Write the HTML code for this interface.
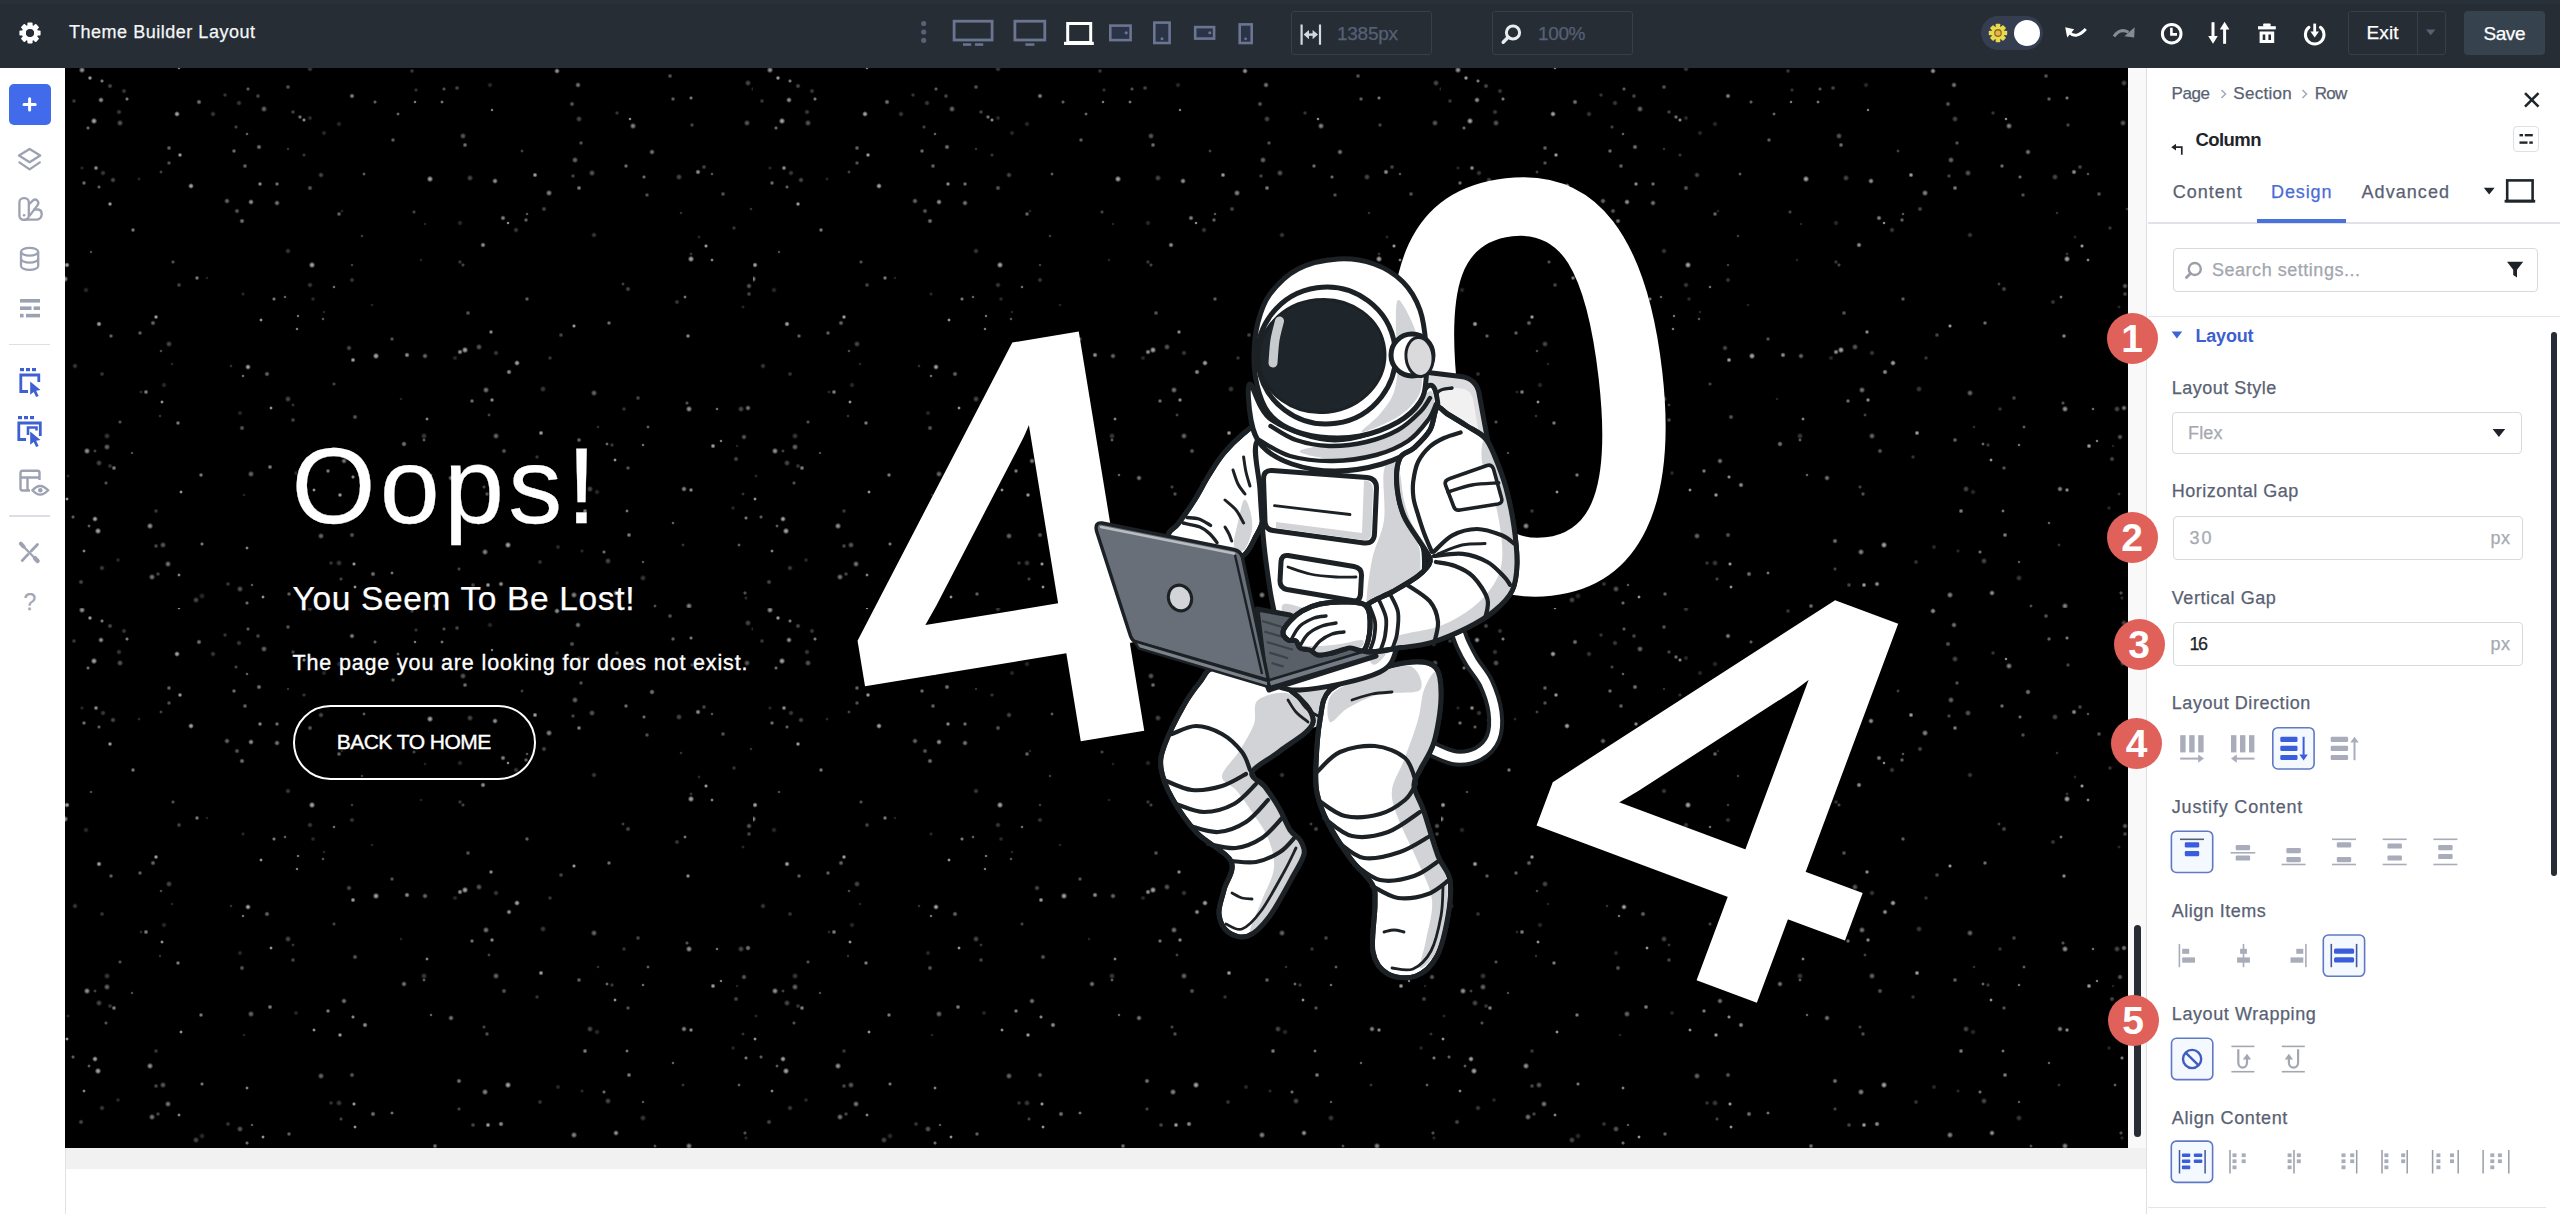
<!DOCTYPE html><html lang="en"><head><meta charset="utf-8"><title>Theme Builder Layout</title><style>
*{box-sizing:border-box;margin:0;padding:0}
html,body{width:2560px;height:1214px;overflow:hidden;background:#fff}
body{position:relative;font-family:"Liberation Sans",sans-serif;-webkit-font-smoothing:antialiased}
.t{position:absolute;white-space:nowrap;display:block;-webkit-text-stroke:0.25px currentColor}
.abs{position:absolute}
#top{position:absolute;left:0;top:0;width:2560px;height:68px;background:#262d35}
#top:before{content:"";position:absolute;left:0;top:0;width:100%;height:4px;background:#293038}
#side{position:absolute;left:0;top:68px;width:65px;height:1146px;background:#fff}
#canvas{position:absolute;left:65px;top:68px;width:2063px;height:1080px;background:#000;overflow:hidden}
#below{position:absolute;left:65px;top:1148px;width:2082px;height:21px;background:#f1f1f1}
#gutter{position:absolute;left:2128px;top:68px;width:19px;height:1080px;background:#f9f9f9}
#panel{position:absolute;left:2146px;top:68px;width:414px;height:1146px;background:#fff;border-left:1.5px solid #dcdfe3}
.box{position:absolute;border:1.5px solid #d6d9de;border-radius:4px;background:#fff}
.sel{position:absolute;border:1.5px solid #5b77c9;border-radius:5px;background:#f3f7ff}
.badge{position:absolute;width:51px;height:51px;border-radius:50%;background:#e0605a;color:#fff;font-weight:700;font-size:39px;line-height:51px;text-align:center}
</style></head><body>
<div id="top">
<svg class="abs" style="left:18px;top:21px" width="24" height="24" viewBox="-12 -12 24 24"><g fill="#fff"><rect x="-2.6" y="-10.6" width="5.2" height="6" rx="1" transform="rotate(0)"/><rect x="-2.6" y="-10.6" width="5.2" height="6" rx="1" transform="rotate(45)"/><rect x="-2.6" y="-10.6" width="5.2" height="6" rx="1" transform="rotate(90)"/><rect x="-2.6" y="-10.6" width="5.2" height="6" rx="1" transform="rotate(135)"/><rect x="-2.6" y="-10.6" width="5.2" height="6" rx="1" transform="rotate(180)"/><rect x="-2.6" y="-10.6" width="5.2" height="6" rx="1" transform="rotate(225)"/><rect x="-2.6" y="-10.6" width="5.2" height="6" rx="1" transform="rotate(270)"/><rect x="-2.6" y="-10.6" width="5.2" height="6" rx="1" transform="rotate(315)"/></g><circle r="6.1" fill="none" stroke="#fff" stroke-width="4"/><circle r="3.6" fill="#262d35"/></svg>
<span class="t" style="left:69.00px;top:21px;font-size:18px;line-height:22px;color:#f4f6f8;letter-spacing:0.521px;">Theme Builder Layout</span>
<svg class="abs" style="left:918px;top:18px" width="12" height="28" viewBox="0 0 12 28"><g fill="#59617a"><circle cx="5.7" cy="5.5" r="2.6"/><circle cx="5.7" cy="14" r="2.6"/><circle cx="5.7" cy="22.3" r="2.6"/></g></svg>
<svg class="abs" style="left:945px;top:14px" width="320" height="40" viewBox="945 14 320 40"><g fill="none" stroke="#6b7592" stroke-width="2.8"><rect x="954.1" y="21.2" width="38" height="18.8"/><rect x="1014.9" y="21.2" width="29.9" height="18.8"/></g><g fill="#6b7592"><rect x="963" y="43.3" width="8.2" height="2.5"/><rect x="975" y="43.3" width="8.2" height="2.5"/><rect x="1025.4" y="43.3" width="9" height="2.5"/></g><rect x="1067.7" y="23.5" width="23" height="19" fill="none" stroke="#fff" stroke-width="3"/><rect x="1064" y="41.8" width="29.8" height="3.2" fill="#fff"/><g fill="#2b3347" stroke="#6b7592" stroke-width="2.6"><rect x="1110.3" y="25.6" width="20.3" height="14.5"/><rect x="1154.3" y="22.6" width="15.3" height="20.4"/><rect x="1195.2" y="27.1" width="18.9" height="11.5"/><rect x="1239.7" y="24.4" width="12" height="18.6"/></g><g fill="#6b7592"><circle cx="1126.2" cy="32.8" r="1.6"/><circle cx="1162" cy="38.8" r="1.5"/><circle cx="1209.8" cy="32.8" r="1.5"/><circle cx="1245.6" cy="38.8" r="1.4"/></g></svg>
<div class="abs" style="left:1291px;top:11px;width:141px;height:44px;border:1.5px solid #363f4c;border-radius:3px"></div>
<svg class="abs" style="left:1299px;top:22px" width="24" height="26" viewBox="0 0 24 26"><g stroke="#d3d8e2" stroke-width="2.200" fill="none"><path d="M2.600 2.500v20.300M21 2.500v20.300"/><path d="M8 12.600h8" stroke-width="2.400"/></g><path d="M4.600 12.600l5.400-4.600v9.200zM19 12.600l-5.400-4.600v9.200z" fill="#d3d8e2"/></svg>
<span class="t" style="left:1337.00px;top:22px;font-size:19px;line-height:23px;color:#566176;letter-spacing:-0.268px;">1385px</span>
<div class="abs" style="left:1491.5px;top:11px;width:141px;height:44px;border:1.5px solid #363f4c;border-radius:3px"></div>
<svg class="abs" style="left:1500px;top:21px" width="24" height="24" viewBox="0 0 24 24"><circle cx="13" cy="11.5" r="6.6" fill="none" stroke="#e9ecef" stroke-width="3"/><path d="M8.2 16.2L3.2 21.2" stroke="#e9ecef" stroke-width="3.4" stroke-linecap="round"/></svg>
<span class="t" style="left:1538.00px;top:22px;font-size:19px;line-height:23px;color:#566176;letter-spacing:-0.367px;">100%</span>
<div class="abs" style="left:1980.5px;top:16px;width:62px;height:33.5px;border-radius:17px;background:#353e50"></div>
<svg class="abs" style="left:1986px;top:20.5px" width="24" height="24" viewBox="-12 -12 24 24"><g fill="#ead94c"><rect x="-2.3" y="-9.2" width="4.6" height="5" rx="0.8" transform="rotate(0)"/><rect x="-2.3" y="-9.2" width="4.6" height="5" rx="0.8" transform="rotate(45)"/><rect x="-2.3" y="-9.2" width="4.6" height="5" rx="0.8" transform="rotate(90)"/><rect x="-2.3" y="-9.2" width="4.6" height="5" rx="0.8" transform="rotate(135)"/><rect x="-2.3" y="-9.2" width="4.6" height="5" rx="0.8" transform="rotate(180)"/><rect x="-2.3" y="-9.2" width="4.6" height="5" rx="0.8" transform="rotate(225)"/><rect x="-2.3" y="-9.2" width="4.6" height="5" rx="0.8" transform="rotate(270)"/><rect x="-2.3" y="-9.2" width="4.6" height="5" rx="0.8" transform="rotate(315)"/></g><circle r="6.4" fill="#ead94c"/><circle r="3.9" fill="#8a6d1c"/><circle r="2.6" fill="#e9b44a"/></svg>
<div class="abs" style="left:2013.7px;top:19.5px;width:26px;height:26px;border-radius:50%;background:#fff"></div>
<svg class="abs" style="left:2063px;top:21px" width="26" height="24" viewBox="0 0 26 24"><path d="M6.5 11.5Q13 18.5 22.8 8" fill="none" stroke="#fff" stroke-width="3"/><path d="M2.2 6.2L11.2 8.2L4.2 16.4z" fill="#fff"/></svg>
<svg class="abs" style="left:2111px;top:21px" width="26" height="24" viewBox="0 0 26 24"><path d="M3 15.5Q9 6.5 17.5 11.3" fill="none" stroke="#858c95" stroke-width="3"/><path d="M23.6 6.2L23.2 16.6L13.4 15.2z" fill="#858c95"/></svg>
<svg class="abs" style="left:2159px;top:20.5px" width="26" height="26" viewBox="0 0 26 26"><circle cx="12.7" cy="12.7" r="9.3" fill="none" stroke="#fff" stroke-width="3"/><path d="M12.4 6.8v6.6h5.6" fill="none" stroke="#fff" stroke-width="2.6"/></svg>
<svg class="abs" style="left:2206px;top:20px" width="26" height="26" viewBox="0 0 26 26"><g stroke="#fff" stroke-width="3" fill="none"><path d="M7 2.2v15"/><path d="M18.6 8.5v15.3"/></g><path d="M2.2 16h9.6L7 23.8zM13.8 9.4h9.6L18.6 1.8z" fill="#fff"/></svg>
<svg class="abs" style="left:2255px;top:20px" width="24" height="26" viewBox="0 0 24 26"><g fill="#fff"><rect x="3" y="6.2" width="17.8" height="3.2"/><rect x="8.2" y="3.4" width="7.4" height="3.4" rx="0.8"/><path d="M4.6 11.6h14.6v11.4H4.6zM7.7 14.6v5.4h2.6v-5.4zM13.4 14.6v5.4h2.6v-5.4z" fill-rule="evenodd"/></g></svg>
<svg class="abs" style="left:2302px;top:20.5px" width="26" height="26" viewBox="0 0 26 26"><path d="M7 6.3A9.3 9.3 0 1 0 18.4 6.3" fill="none" stroke="#fff" stroke-width="3" stroke-linecap="round"/><path d="M12.7 2.6v9" stroke="#fff" stroke-width="2.8" fill="none"/><path d="M8.4 10.6h8.6L12.7 16.6z" fill="#fff"/></svg>
<div class="abs" style="left:2348px;top:11px;width:97.5px;height:44px;border:1.5px solid #363f4c;border-radius:3px"></div>
<div class="abs" style="left:2416.5px;top:11px;width:1.5px;height:44px;background:#363f4c"></div>
<span class="t" style="left:2366.50px;top:21px;font-size:19px;line-height:23px;color:#fff;letter-spacing:0.109px;">Exit</span>
<svg class="abs" style="left:2424px;top:28px" width="14" height="10" viewBox="0 0 14 10"><path d="M2 1.5h9.4L6.7 7.2z" fill="#596275"/></svg>
<div class="abs" style="left:2464px;top:11px;width:81px;height:44px;border-radius:4px;background:#37424f"></div>
<span class="t" style="left:2483.50px;top:22px;font-size:19px;line-height:23px;color:#fff;letter-spacing:-0.434px;">Save</span>
</div>
<div id="side"></div>
<div class="abs" style="left:9px;top:83.5px;width:41.5px;height:41.5px;border-radius:5px;background:#416bea"></div>
<svg class="abs" style="left:19px;top:94px" width="21" height="21" viewBox="0 0 21 21"><path d="M10.600 4.800v11.200M5 10.400h11.200" stroke="#fff" stroke-width="3" stroke-linecap="round" fill="none"/></svg>
<svg class="abs" style="left:16px;top:146px" width="28" height="28" viewBox="0 0 28 28"><g fill="none" stroke="#9da2b3" stroke-width="2.3" stroke-linejoin="round" stroke-linecap="round"><path d="M13.6 3L24.2 9.6L13.6 16.2L3 9.6z"/><path d="M3.400 16.400L13.600 23.400L23.800 16.400" /></g></svg>
<svg class="abs" style="left:16px;top:195px" width="30" height="28" viewBox="0 0 30 28"><g fill="none" stroke="#9da2b3" stroke-width="2.3" stroke-linejoin="round"><rect x="3.4" y="3.2" width="9.4" height="21.6" rx="4.2"/><path d="M12.8 9.5l4.5-4.3q2-1.6 4 0.300q2 2.300 0.300 4.600l-8.300 11"/><path d="M17.500 14.500h4.800q3.400 0.600 3.400 4.800q-0.400 4.600-4.600 5.300h-12.600"/></g><circle cx="8.1" cy="20.300" r="1.300" fill="#9da2b3"/></svg>
<svg class="abs" style="left:17px;top:245px" width="26" height="28" viewBox="0 0 26 28"><g fill="none" stroke="#9da2b3" stroke-width="2.300"><ellipse cx="12.6" cy="6.800" rx="8.600" ry="3.900"/><path d="M4 6.800v14.200c0 2.200 3.900 3.900 8.600 3.900s8.600-1.700 8.600-3.900V6.800"/><path d="M4 13.800c0 2.200 3.900 3.900 8.600 3.900s8.600-1.700 8.600-3.900"/></g></svg>
<svg class="abs" style="left:18px;top:297px" width="24" height="24" viewBox="0 0 24 24"><g fill="#9da2b3"><rect x="2" y="2" width="20" height="3.600"/><rect x="2" y="9.400" width="11.500" height="3.600"/><rect x="15.600" y="9.400" width="6.400" height="3.600"/><rect x="2" y="16.800" width="3.600" height="3.600"/><rect x="8" y="16.800" width="14" height="3.600"/></g></svg>
<div class="abs" style="left:9px;top:343.500px;width:41px;height:1.500px;background:#dcdfe4"></div>
<svg class="abs" style="left:16px;top:364px" width="28" height="36" viewBox="0 0 28 36"><g fill="#3e60d2"><rect x="4" y="4" width="4" height="3.200"/><rect x="10" y="4" width="4" height="3.200"/><rect x="16" y="4" width="4" height="3.200"/></g><path d="M12 27.500H4.800V11h18v7" fill="none" stroke="#3e60d2" stroke-width="2.800"/><path d="M14.200 17.500l10.300 8.600-4.300 0.700 2.400 5.200-2.500 1.100-2.400-5.200-3.500 2.900z" fill="#3e60d2"/></svg>
<svg class="abs" style="left:14px;top:412px" width="32" height="38" viewBox="0 0 32 38"><g fill="#3e60d2"><rect x="4" y="4" width="4" height="3.200"/><rect x="10" y="4" width="4" height="3.200"/><rect x="16" y="4" width="4" height="3.200"/></g><path d="M12 27.500H4.800V11h21.500v13" fill="none" stroke="#3e60d2" stroke-width="2.800"/><path d="M14 23V15.500h8.500v3" fill="none" stroke="#3e60d2" stroke-width="2.600"/><path d="M16.200 19.500l10.300 8.600-4.300 0.700 2.400 5.200-2.500 1.100-2.400-5.200-3.500 2.900z" fill="#3e60d2"/></svg>
<svg class="abs" style="left:16px;top:466px" width="36" height="34" viewBox="0 0 36 34"><g fill="none" stroke="#9da2b3" stroke-width="2.400"><path d="M14 24.500H6.500q-2 0-2-2V6.800q0-2 2-2h15q2 0 2 2V14"/><path d="M4.500 11.500h19M11.500 11.500v13"/><path d="M16.500 24.300q7.500-8.600 15.600 0q-8.100 8.600-15.600 0z" fill="#fff"/></g><circle cx="24.300" cy="24.300" r="2.300" fill="#9da2b3"/></svg>
<div class="abs" style="left:9px;top:515px;width:41px;height:1.500px;background:#dcdfe4"></div>
<svg class="abs" style="left:17px;top:540px" width="26" height="26" viewBox="0 0 26 26"><g stroke="#9da2b3" fill="none" stroke-linecap="round"><path d="M6 6L19.500 20" stroke-width="2.200"/><path d="M20.500 4.500L14.200 11M11 14.400L5.200 20.600" stroke-width="2.800"/><path d="M18 18.200l2.600 2.800" stroke-width="4.400"/><path d="M3.800 3.600l2.800 3" stroke-width="3.800"/></g></svg>
<span class="t" style="left:23.60px;top:588px;font-size:23px;line-height:28px;color:#a3a7b4;">?</span>
<div id="below"></div><div id="gutter"></div><div class="abs" style="left:65px;top:1148px;width:1px;height:66px;background:#e2e2e2"></div>
<div class="abs" style="left:2133.5px;top:925px;width:7px;height:212px;border-radius:4px;background:#262d35"></div>
<div id="panel"></div>
<span class="t" style="left:2171.50px;top:84px;font-size:17px;line-height:20px;color:#596173;letter-spacing:-0.398px;">Page</span>
<span class="t" style="left:2233.30px;top:84px;font-size:17px;line-height:20px;color:#596173;letter-spacing:0.301px;">Section</span>
<span class="t" style="left:2314.80px;top:84px;font-size:17px;line-height:20px;color:#596173;letter-spacing:-0.776px;">Row</span>
<svg class="abs" style="left:2218.5px;top:88px" width="10" height="12" viewBox="0 0 10 12"><path d="M2.5 2l4 4-4 4" fill="none" stroke="#a4a9b6" stroke-width="1.500"/></svg>
<svg class="abs" style="left:2300px;top:88px" width="10" height="12" viewBox="0 0 10 12"><path d="M2.5 2l4 4-4 4" fill="none" stroke="#a4a9b6" stroke-width="1.500"/></svg>
<svg class="abs" style="left:2521px;top:89px" width="22" height="22" viewBox="0 0 22 22"><path d="M4 4.200l13.500 13.500M17.500 4.200L4 17.700" stroke="#20252b" stroke-width="2.600" fill="none"/></svg>
<svg class="abs" style="left:2169px;top:140px" width="18" height="18" viewBox="0 0 18 18"><path d="M4.500 7.200h8.300v7.600" fill="none" stroke="#20252b" stroke-width="1.700"/><path d="M2.200 7.200l4.800-3.400v6.800z" fill="#20252b"/></svg>
<span class="t" style="left:2195.50px;top:129px;font-size:18.5px;line-height:22px;color:#1f242b;font-weight:700;-webkit-text-stroke:0;letter-spacing:-0.571px;">Column</span>
<div class="abs" style="left:2513px;top:126px;width:26px;height:26px;border:1.500px solid #dcdfe4;border-radius:4px;background:#fff"></div>
<svg class="abs" style="left:2513px;top:126px" width="26" height="26" viewBox="0 0 26 26"><g fill="#23282f"><rect x="6.500" y="8" width="3.500" height="2.400"/><rect x="11.800" y="8" width="8" height="2.400"/><rect x="6.500" y="15.400" width="8" height="2.400"/><rect x="16.300" y="15.400" width="3.500" height="2.400"/></g></svg>
<span class="t" style="left:2172.80px;top:181px;font-size:18px;line-height:22px;color:#596173;letter-spacing:0.994px;">Content</span>
<span class="t" style="left:2271.00px;top:181px;font-size:18px;line-height:22px;color:#4a6cd4;letter-spacing:0.893px;">Design</span>
<span class="t" style="left:2361.50px;top:181px;font-size:18px;line-height:22px;color:#596173;letter-spacing:1.062px;">Advanced</span>
<div class="abs" style="left:2147.500px;top:222px;width:412.500px;height:1.500px;background:#dfe2e6"></div>
<div class="abs" style="left:2257px;top:218.700px;width:89px;height:4.300px;background:#4a72de"></div>
<svg class="abs" style="left:2482px;top:186px" width="14" height="10" viewBox="0 0 14 10"><path d="M1.800 1.800h10.800L7.200 8.600z" fill="#1e2329"/></svg>
<svg class="abs" style="left:2503px;top:177px" width="34" height="28" viewBox="0 0 34 28"><rect x="4.200" y="3.400" width="25.400" height="20.600" fill="none" stroke="#20252b" stroke-width="2.600"/><rect x="1.600" y="22.800" width="30.600" height="2.800" fill="#20252b"/></svg>
<div class="box" style="left:2172.500px;top:247.500px;width:365.500px;height:44.500px"></div>
<svg class="abs" style="left:2183px;top:259px" width="22" height="22" viewBox="0 0 22 22"><circle cx="11.800" cy="10" r="6" fill="none" stroke="#9a9fa8" stroke-width="2.400"/><path d="M7.500 14.400L3.400 18.600" stroke="#9a9fa8" stroke-width="2.800" stroke-linecap="round"/></svg>
<span class="t" style="left:2212.00px;top:259px;font-size:18px;line-height:22px;color:#a2a6ae;letter-spacing:0.525px;">Search settings...</span>
<svg class="abs" style="left:2505px;top:259px" width="20" height="22" viewBox="0 0 20 22"><path d="M2 2.800h16.200L12 10.800v7.600l-3.800-2.400v-5.200z" fill="#1e2329"/></svg>
<div class="abs" style="left:2147.500px;top:315.500px;width:412.500px;height:1.500px;background:#e3e5e9"></div>
<div class="abs" style="left:2551px;top:332px;width:6px;height:544px;border-radius:3px;background:#262d35"></div>
<svg class="abs" style="left:2169px;top:329px" width="16" height="12" viewBox="0 0 16 12"><path d="M2.600 2.600h10.600L7.900 9.400z" fill="#3f63d8"/></svg>
<span class="t" style="left:2195.50px;top:325px;font-size:18px;line-height:22px;color:#3d5fd0;font-weight:700;-webkit-text-stroke:0;letter-spacing:-0.201px;">Layout</span>
<span class="t" style="left:2171.80px;top:377px;font-size:18px;line-height:22px;color:#596173;letter-spacing:0.495px;">Layout Style</span>
<div class="box" style="left:2171.500px;top:412px;width:350px;height:41.500px"></div>
<span class="t" style="left:2188.00px;top:422px;font-size:18px;line-height:22px;color:#a6a9b1;letter-spacing:0.166px;">Flex</span>
<svg class="abs" style="left:2490px;top:426px" width="18" height="14" viewBox="0 0 18 14"><path d="M2.600 3h12.600L8.900 11z" fill="#1e2329"/></svg>
<span class="t" style="left:2171.80px;top:480px;font-size:18px;line-height:22px;color:#596173;letter-spacing:0.495px;">Horizontal Gap</span>
<div class="box" style="left:2172.500px;top:516px;width:350.500px;height:43.500px"></div>
<span class="t" style="left:2189.50px;top:527px;font-size:18px;line-height:22px;color:#a6a9b1;letter-spacing:1.984px;">30</span>
<span class="t" style="left:2490.50px;top:527px;font-size:18px;line-height:22px;color:#a6a9b1;letter-spacing:0.492px;">px</span>
<span class="t" style="left:2171.80px;top:587px;font-size:18px;line-height:22px;color:#596173;letter-spacing:0.541px;">Vertical Gap</span>
<div class="box" style="left:2172.500px;top:622px;width:350.500px;height:43.500px"></div>
<span class="t" style="left:2189.50px;top:633px;font-size:18px;line-height:22px;color:#1f242b;letter-spacing:-1.516px;">16</span>
<span class="t" style="left:2490.50px;top:633px;font-size:18px;line-height:22px;color:#a6a9b1;letter-spacing:0.492px;">px</span>
<span class="t" style="left:2171.80px;top:692px;font-size:18px;line-height:22px;color:#596173;letter-spacing:0.562px;">Layout Direction</span>
<span class="t" style="left:2171.80px;top:796px;font-size:18px;line-height:22px;color:#596173;letter-spacing:0.818px;">Justify Content</span>
<span class="t" style="left:2171.80px;top:900px;font-size:18px;line-height:22px;color:#596173;letter-spacing:0.497px;">Align Items</span>
<span class="t" style="left:2171.80px;top:1003px;font-size:18px;line-height:22px;color:#596173;letter-spacing:0.589px;">Layout Wrapping</span>
<span class="t" style="left:2171.80px;top:1107px;font-size:18px;line-height:22px;color:#596173;letter-spacing:0.619px;">Align Content</span>
<div class="abs" style="left:2147.500px;top:1206.500px;width:398px;height:1.500px;background:#e3e5e9"></div>
<svg class="abs" style="left:2160px;top:720px" width="380" height="480" viewBox="2160 720 380 480"><rect x="2180.2" y="735.200" width="5.400" height="17.200" fill="#a9acba"/><rect x="2189.2" y="735.200" width="5.400" height="17.200" fill="#a9acba"/><rect x="2198.2" y="735.200" width="5.400" height="17.200" fill="#a9acba"/><path d="M2180.200 758.600h20" stroke="#a9acba" stroke-width="2" fill="none"/><path d="M2198.200 754.400l5.800 4.200-5.800 4.200z" fill="#a9acba"/><rect x="2231" y="735.200" width="5.400" height="17.200" fill="#a9acba"/><rect x="2240" y="735.200" width="5.400" height="17.200" fill="#a9acba"/><rect x="2249" y="735.200" width="5.400" height="17.200" fill="#a9acba"/><path d="M2234.500 758.600h20" stroke="#a9acba" stroke-width="2" fill="none"/><path d="M2236.800 754.400l-5.800 4.200 5.800 4.200z" fill="#a9acba"/><rect x="2272.8" y="727.7" width="41.3" height="41.3" rx="5" fill="#f4f8ff" stroke="#5f79c4" stroke-width="1.600"/><rect x="2280.300" y="736.8" width="17.200" height="5.100" rx="1.200" fill="#3a5ddb"/><rect x="2280.300" y="745.8" width="17.200" height="5.100" rx="1.200" fill="#3a5ddb"/><rect x="2280.300" y="754.9" width="17.200" height="5.100" rx="1.200" fill="#3a5ddb"/><path d="M2303.600 736.800v18" stroke="#3a5ddb" stroke-width="2" fill="none"/><path d="M2299.400 754.600h8.400l-4.200 5.800z" fill="#3a5ddb"/><rect x="2330.700" y="736.8" width="17.400" height="5.100" rx="1.200" fill="#a9acba"/><rect x="2330.700" y="745.8" width="17.400" height="5.100" rx="1.200" fill="#a9acba"/><rect x="2330.700" y="754.9" width="17.400" height="5.100" rx="1.200" fill="#a9acba"/><path d="M2354.500 760.200v-18" stroke="#a9acba" stroke-width="2" fill="none"/><path d="M2350.300 742.600h8.400l-4.200-5.800z" fill="#a9acba"/><rect x="2171.4" y="831.2" width="41.3" height="41.3" rx="5" fill="#f4f8ff" stroke="#5f79c4" stroke-width="1.600"/><rect x="2180" y="838.500" width="24" height="1.600" fill="#5a6072"/><rect x="2184.8" y="842.2" width="14.400" height="5.200" rx="1.200" fill="#3a5ddb"/><rect x="2184.8" y="851" width="14.400" height="5.200" rx="1.200" fill="#3a5ddb"/><rect x="2230.6" y="852" width="24.600" height="1.600" fill="#a9acba"/><rect x="2235.7000000000003" y="845" width="14.400" height="5.200" rx="1.200" fill="#a9acba"/><rect x="2235.7000000000003" y="855.4" width="14.400" height="5.200" rx="1.200" fill="#a9acba"/><rect x="2281.6" y="863.700" width="24" height="1.600" fill="#a9acba"/><rect x="2286.4" y="848" width="14.400" height="5.200" rx="1.200" fill="#a9acba"/><rect x="2286.4" y="857" width="14.400" height="5.200" rx="1.200" fill="#a9acba"/><rect x="2332" y="838.500" width="24" height="1.600" fill="#a9acba"/><rect x="2332" y="863.700" width="24" height="1.600" fill="#a9acba"/><rect x="2336.8" y="842.2" width="14.400" height="5.200" rx="1.200" fill="#a9acba"/><rect x="2336.8" y="857" width="14.400" height="5.200" rx="1.200" fill="#a9acba"/><rect x="2382.7" y="838.500" width="24" height="1.600" fill="#a9acba"/><rect x="2382.7" y="863.700" width="24" height="1.600" fill="#a9acba"/><rect x="2387.5" y="843.4" width="14.400" height="5.200" rx="1.200" fill="#a9acba"/><rect x="2387.5" y="855.4" width="14.400" height="5.200" rx="1.200" fill="#a9acba"/><rect x="2433.4" y="838.500" width="24" height="1.600" fill="#a9acba"/><rect x="2433.4" y="863.700" width="24" height="1.600" fill="#a9acba"/><rect x="2438.2000000000003" y="845" width="14.400" height="5.200" rx="1.200" fill="#a9acba"/><rect x="2438.2000000000003" y="853.9" width="14.400" height="5.200" rx="1.200" fill="#a9acba"/><rect x="2178.6" y="943.9" width="1.6" height="23.300000000000068" fill="#a9acba"/><rect x="2182.200" y="948.800" width="7" height="5" fill="#a9acba"/><rect x="2182.200" y="957.400" width="12.800" height="5.300" fill="#a9acba"/><rect x="2242.7" y="943.9" width="1.6" height="23.300000000000068" fill="#a9acba"/><rect x="2240.100" y="948.800" width="6.800" height="5" fill="#a9acba"/><rect x="2237.100" y="957.400" width="12.800" height="5.300" fill="#a9acba"/><rect x="2305.1" y="943.9" width="1.6" height="23.300000000000068" fill="#a9acba"/><rect x="2296.300" y="948.800" width="7" height="5" fill="#a9acba"/><rect x="2290.500" y="957.400" width="12.800" height="5.300" fill="#a9acba"/><rect x="2323.3" y="935" width="41.3" height="41.3" rx="5" fill="#f4f8ff" stroke="#5f79c4" stroke-width="1.600"/><rect x="2330.5" y="943.9" width="1.6" height="23.300000000000068" fill="#41579f"/><rect x="2355.7999999999997" y="943.9" width="1.6" height="23.300000000000068" fill="#41579f"/><rect x="2334" y="948.400" width="20.100" height="5.300" rx="1.500" fill="#3a5ddb"/><rect x="2334" y="957.200" width="20.100" height="5.400" rx="1.500" fill="#3a5ddb"/><rect x="2171.5" y="1038.3" width="41.3" height="41.3" rx="5" fill="#f4f8ff" stroke="#5f79c4" stroke-width="1.600"/><circle cx="2192.100" cy="1059" r="9.100" fill="none" stroke="#3f5cc0" stroke-width="2.400"/><path d="M2185.600 1052.600l13 12.800" stroke="#3f5cc0" stroke-width="2.400"/><rect x="2231.400" y="1045.600" width="23" height="1.600" fill="#a3a7b0"/><rect x="2231.400" y="1070.900" width="23" height="1.600" fill="#a3a7b0"/><path d="M2238.300 1049.300v13.500a4.350 4.800 0 0 0 8.700 0v-4.500" fill="none" stroke="#a3a7b0" stroke-width="2.200"/><path d="M2242.800 1059.400h8.400l-4.200-5.600z" fill="#a3a7b0"/><rect x="2281.800" y="1045.600" width="23" height="1.600" fill="#a3a7b0"/><rect x="2281.800" y="1070.900" width="23" height="1.600" fill="#a3a7b0"/><path d="M2298.100 1049.300v13.500a4.600 4.800 0 0 1-9.200 0v-4.500" fill="none" stroke="#a3a7b0" stroke-width="2.200"/><path d="M2284.700 1059.400h8.400l-4.200-5.600z" fill="#a3a7b0"/><rect x="2171.3" y="1141.1" width="41.3" height="41.3" rx="5" fill="#f4f8ff" stroke="#5f79c4" stroke-width="1.600"/><rect x="2178.75" y="1150" width="1.5" height="23.5" fill="#41579f"/><rect x="2204.35" y="1150" width="1.5" height="23.5" fill="#41579f"/><rect x="2181.900" y="1153.4" width="8.400" height="3.700" rx="1" fill="#3a5ddb"/><rect x="2193.800" y="1153.4" width="8.500" height="3.700" rx="1" fill="#3a5ddb"/><rect x="2181.900" y="1159.4" width="8.400" height="3.700" rx="1" fill="#3a5ddb"/><rect x="2193.800" y="1159.4" width="8.500" height="3.700" rx="1" fill="#3a5ddb"/><rect x="2181.900" y="1165.5" width="8.400" height="3.700" rx="1" fill="#3a5ddb"/><rect x="2229.25" y="1150" width="1.5" height="23.5" fill="#9a9da8"/><rect x="2232.5" y="1153.4" width="4" height="3.700" fill="#a9acba"/><rect x="2241.7" y="1153.4" width="4" height="3.700" fill="#a9acba"/><rect x="2232.5" y="1159.4" width="4" height="3.700" fill="#a9acba"/><rect x="2241.7" y="1159.4" width="4" height="3.700" fill="#a9acba"/><rect x="2232.5" y="1165.5" width="4" height="3.700" fill="#a9acba"/><rect x="2293.25" y="1150" width="1.5" height="23.5" fill="#9a9da8"/><rect x="2287.6" y="1153.4" width="4" height="3.700" fill="#a9acba"/><rect x="2296.8" y="1153.4" width="4" height="3.700" fill="#a9acba"/><rect x="2287.6" y="1159.4" width="4" height="3.700" fill="#a9acba"/><rect x="2296.8" y="1159.4" width="4" height="3.700" fill="#a9acba"/><rect x="2287.6" y="1165.5" width="4" height="3.700" fill="#a9acba"/><rect x="2355.95" y="1150" width="1.5" height="23.5" fill="#9a9da8"/><rect x="2341.5" y="1153.4" width="4" height="3.700" fill="#a9acba"/><rect x="2350.2" y="1153.4" width="4" height="3.700" fill="#a9acba"/><rect x="2341.5" y="1159.4" width="4" height="3.700" fill="#a9acba"/><rect x="2350.2" y="1159.4" width="4" height="3.700" fill="#a9acba"/><rect x="2341.5" y="1165.5" width="4" height="3.700" fill="#a9acba"/><rect x="2381.25" y="1150" width="1.5" height="23.5" fill="#9a9da8"/><rect x="2406.45" y="1150" width="1.5" height="23.5" fill="#9a9da8"/><rect x="2384.4" y="1153.4" width="4" height="3.700" fill="#a9acba"/><rect x="2401.2" y="1153.4" width="4" height="3.700" fill="#a9acba"/><rect x="2384.4" y="1159.4" width="4" height="3.700" fill="#a9acba"/><rect x="2401.2" y="1159.4" width="4" height="3.700" fill="#a9acba"/><rect x="2384.4" y="1165.5" width="4" height="3.700" fill="#a9acba"/><rect x="2431.85" y="1150" width="1.5" height="23.5" fill="#9a9da8"/><rect x="2457.45" y="1150" width="1.5" height="23.5" fill="#9a9da8"/><rect x="2436.4" y="1153.4" width="4" height="3.700" fill="#a9acba"/><rect x="2450" y="1153.4" width="4" height="3.700" fill="#a9acba"/><rect x="2436.4" y="1159.4" width="4" height="3.700" fill="#a9acba"/><rect x="2450" y="1159.4" width="4" height="3.700" fill="#a9acba"/><rect x="2436.4" y="1165.5" width="4" height="3.700" fill="#a9acba"/><rect x="2482.35" y="1150" width="1.5" height="23.5" fill="#9a9da8"/><rect x="2508.05" y="1150" width="1.5" height="23.5" fill="#9a9da8"/><rect x="2490.3" y="1153.4" width="4" height="3.700" fill="#a9acba"/><rect x="2497.9" y="1153.4" width="4" height="3.700" fill="#a9acba"/><rect x="2490.3" y="1159.4" width="4" height="3.700" fill="#a9acba"/><rect x="2497.9" y="1159.4" width="4" height="3.700" fill="#a9acba"/><rect x="2490.3" y="1165.5" width="4" height="3.700" fill="#a9acba"/></svg>
<svg id="canvas" class="abs" width="2063" height="1080" viewBox="65 68 2063 1080" style="left:65px;top:68px;background:#000"><defs><pattern id="st" x="65" y="68" width="688" height="540" patternUnits="userSpaceOnUse"><g fill="url(#sg)"><circle cx="223" cy="81" r="1.8" opacity="0.24"/><circle cx="565" cy="51" r="1.8" opacity="0.68"/><circle cx="148" cy="46" r="3.0" opacity="0.24"/><circle cx="166" cy="298" r="1.8" opacity="0.24"/><circle cx="652" cy="341" r="1.8" opacity="0.54"/><circle cx="34" cy="119" r="2.2" opacity="0.42"/><circle cx="288" cy="292" r="2.6" opacity="0.68"/><circle cx="561" cy="98" r="2.4" opacity="0.48"/><circle cx="67" cy="385" r="1.8" opacity="0.36"/><circle cx="342" cy="287" r="2.8" opacity="0.6"/><circle cx="403" cy="245" r="2.6" opacity="0.36"/><circle cx="547" cy="377" r="2.4" opacity="0.24"/><circle cx="395" cy="284" r="2.8" opacity="0.6"/><circle cx="198" cy="529" r="2.0" opacity="0.68"/><circle cx="288" cy="409" r="2.2" opacity="0.6"/><circle cx="290" cy="519" r="2.0" opacity="0.68"/><circle cx="394" cy="473" r="2.8" opacity="0.48"/><circle cx="478" cy="321" r="3.3" opacity="0.24"/><circle cx="578" cy="510" r="3.3" opacity="0.24"/><circle cx="42" cy="379" r="3.3" opacity="0.42"/><circle cx="493" cy="479" r="2.8" opacity="0.18"/><circle cx="647" cy="192" r="2.0" opacity="0.6"/><circle cx="41" cy="415" r="2.2" opacity="0.36"/><circle cx="274" cy="495" r="3.3" opacity="0.24"/><circle cx="114" cy="217" r="2.6" opacity="0.3"/><circle cx="564" cy="467" r="2.6" opacity="0.54"/><circle cx="679" cy="369" r="3.0" opacity="0.36"/><circle cx="104" cy="95" r="2.4" opacity="0.36"/><circle cx="8" cy="449" r="2.2" opacity="0.42"/><circle cx="194" cy="79" r="2.8" opacity="0.48"/><circle cx="656" cy="373" r="1.8" opacity="0.6"/><circle cx="619" cy="421" r="3.0" opacity="0.54"/><circle cx="274" cy="56" r="3.0" opacity="0.18"/><circle cx="131" cy="532" r="3.3" opacity="0.3"/><circle cx="76" cy="324" r="2.0" opacity="0.18"/><circle cx="390" cy="290" r="2.8" opacity="0.18"/><circle cx="48" cy="112" r="3.0" opacity="0.3"/><circle cx="436" cy="516" r="2.8" opacity="0.6"/><circle cx="85" cy="458" r="3.3" opacity="0.6"/><circle cx="333" cy="46" r="2.0" opacity="0.48"/><circle cx="509" cy="258" r="2.2" opacity="0.68"/><circle cx="16" cy="514" r="2.8" opacity="0.3"/><circle cx="475" cy="494" r="2.6" opacity="0.24"/><circle cx="479" cy="141" r="2.8" opacity="0.3"/><circle cx="245" cy="120" r="2.8" opacity="0.36"/><circle cx="422" cy="426" r="2.4" opacity="0.36"/><circle cx="563" cy="400" r="2.4" opacity="0.36"/><circle cx="356" cy="192" r="1.8" opacity="0.18"/><circle cx="544" cy="255" r="2.4" opacity="0.48"/><circle cx="308" cy="506" r="2.8" opacity="0.48"/><circle cx="55" cy="55" r="3.3" opacity="0.36"/><circle cx="232" cy="261" r="1.8" opacity="0.6"/><circle cx="626" cy="186" r="2.0" opacity="0.24"/><circle cx="626" cy="422" r="2.4" opacity="0.6"/><circle cx="612" cy="234" r="2.8" opacity="0.24"/><circle cx="551" cy="525" r="3.0" opacity="0.6"/><circle cx="276" cy="511" r="2.2" opacity="0.3"/><circle cx="683" cy="15" r="3.3" opacity="0.3"/><circle cx="421" cy="322" r="3.3" opacity="0.48"/><circle cx="107" cy="296" r="1.8" opacity="0.18"/><circle cx="550" cy="392" r="2.0" opacity="0.68"/><circle cx="516" cy="75" r="2.4" opacity="0.36"/><circle cx="19" cy="115" r="2.4" opacity="0.48"/><circle cx="178" cy="226" r="2.2" opacity="0.18"/><circle cx="626" cy="191" r="3.3" opacity="0.68"/><circle cx="289" cy="496" r="2.2" opacity="0.68"/><circle cx="104" cy="276" r="3.3" opacity="0.3"/><circle cx="419" cy="419" r="2.2" opacity="0.3"/><circle cx="97" cy="334" r="2.0" opacity="0.68"/><circle cx="42" cy="368" r="3.3" opacity="0.24"/><circle cx="608" cy="31" r="2.4" opacity="0.42"/><circle cx="29" cy="53" r="3.3" opacity="0.68"/><circle cx="19" cy="483" r="2.0" opacity="0.6"/><circle cx="224" cy="526" r="2.4" opacity="0.42"/><circle cx="311" cy="288" r="3.3" opacity="0.68"/><circle cx="648" cy="378" r="2.6" opacity="0.68"/><circle cx="614" cy="109" r="3.3" opacity="0.3"/><circle cx="287" cy="212" r="2.8" opacity="0.24"/><circle cx="462" cy="231" r="2.4" opacity="0.42"/><circle cx="539" cy="484" r="2.2" opacity="0.48"/><circle cx="98" cy="477" r="3.3" opacity="0.36"/><circle cx="514" cy="51" r="3.3" opacity="0.3"/><circle cx="681" cy="450" r="2.2" opacity="0.54"/><circle cx="684" cy="218" r="3.0" opacity="0.36"/><circle cx="245" cy="50" r="2.8" opacity="0.18"/><circle cx="233" cy="248" r="1.8" opacity="0.54"/><circle cx="228" cy="337" r="2.0" opacity="0.24"/><circle cx="678" cy="426" r="2.0" opacity="0.24"/><circle cx="183" cy="21" r="2.2" opacity="0.42"/><circle cx="520" cy="443" r="2.6" opacity="0.54"/><circle cx="103" cy="496" r="3.3" opacity="0.48"/><circle cx="62" cy="31" r="2.2" opacity="0.54"/><circle cx="616" cy="145" r="1.8" opacity="0.24"/><circle cx="552" cy="45" r="2.4" opacity="0.24"/><circle cx="182" cy="66" r="1.8" opacity="0.48"/><circle cx="684" cy="226" r="2.6" opacity="0.3"/><circle cx="30" cy="383" r="2.0" opacity="0.3"/><circle cx="180" cy="98" r="2.6" opacity="0.42"/><circle cx="365" cy="111" r="3.3" opacity="0.68"/><circle cx="462" cy="146" r="1.8" opacity="0.42"/><circle cx="25" cy="10" r="2.4" opacity="0.68"/><circle cx="327" cy="505" r="2.0" opacity="0.54"/><circle cx="452" cy="295" r="3.0" opacity="0.68"/><circle cx="212" cy="116" r="2.4" opacity="0.48"/><circle cx="137" cy="476" r="2.2" opacity="0.54"/><circle cx="681" cy="530" r="2.2" opacity="0.18"/><circle cx="49" cy="400" r="2.6" opacity="0.54"/><circle cx="112" cy="46" r="3.0" opacity="0.68"/><circle cx="461" cy="152" r="2.4" opacity="0.42"/><circle cx="31" cy="100" r="2.6" opacity="0.6"/><circle cx="2" cy="197" r="2.8" opacity="0.68"/><circle cx="223" cy="19" r="2.6" opacity="0.36"/><circle cx="245" cy="1" r="3.0" opacity="0.24"/><circle cx="327" cy="271" r="2.4" opacity="0.36"/><circle cx="347" cy="3" r="2.6" opacity="0.24"/><circle cx="99" cy="317" r="3.0" opacity="0.18"/><circle cx="206" cy="340" r="2.0" opacity="0.68"/><circle cx="587" cy="84" r="3.0" opacity="0.48"/><circle cx="496" cy="267" r="2.6" opacity="0.3"/><circle cx="30" cy="451" r="3.0" opacity="0.68"/><circle cx="96" cy="283" r="1.8" opacity="0.36"/><circle cx="59" cy="23" r="2.8" opacity="0.24"/><circle cx="259" cy="244" r="1.8" opacity="0.18"/><circle cx="431" cy="368" r="3.3" opacity="0.42"/><circle cx="2" cy="431" r="2.0" opacity="0.68"/><circle cx="45" cy="398" r="2.6" opacity="0.24"/><circle cx="582" cy="127" r="2.4" opacity="0.36"/><circle cx="509" cy="527" r="3.3" opacity="0.54"/><circle cx="53" cy="492" r="2.6" opacity="0.18"/><circle cx="424" cy="347" r="2.0" opacity="0.3"/><circle cx="228" cy="352" r="2.6" opacity="0.3"/><circle cx="9" cy="33" r="2.6" opacity="0.24"/><circle cx="476" cy="365" r="2.6" opacity="0.68"/><circle cx="196" cy="252" r="2.0" opacity="0.68"/><circle cx="137" cy="528" r="3.3" opacity="0.18"/><circle cx="199" cy="41" r="3.3" opacity="0.42"/><circle cx="266" cy="495" r="2.4" opacity="0.24"/><circle cx="400" cy="77" r="2.6" opacity="0.48"/><circle cx="91" cy="443" r="2.6" opacity="0.24"/><circle cx="484" cy="125" r="3.3" opacity="0.54"/><circle cx="17" cy="2" r="3.3" opacity="0.6"/><circle cx="279" cy="393" r="3.0" opacity="0.48"/><circle cx="259" cy="65" r="2.8" opacity="0.18"/><circle cx="223" cy="183" r="3.0" opacity="0.24"/><circle cx="647" cy="106" r="1.8" opacity="0.42"/><circle cx="174" cy="35" r="3.0" opacity="0.24"/><circle cx="248" cy="231" r="2.6" opacity="0.18"/><circle cx="193" cy="28" r="2.6" opacity="0.3"/><circle cx="172" cy="143" r="2.8" opacity="0.36"/><circle cx="532" cy="424" r="3.0" opacity="0.18"/><circle cx="559" cy="341" r="2.4" opacity="0.24"/><circle cx="34" cy="395" r="3.3" opacity="0.3"/><circle cx="443" cy="155" r="1.8" opacity="0.68"/><circle cx="88" cy="255" r="2.8" opacity="0.42"/><circle cx="205" cy="399" r="2.6" opacity="0.54"/><circle cx="451" cy="162" r="3.0" opacity="0.24"/><circle cx="115" cy="87" r="2.4" opacity="0.68"/><circle cx="623" cy="268" r="2.4" opacity="0.6"/><circle cx="624" cy="538" r="3.3" opacity="0.54"/><circle cx="96" cy="104" r="2.0" opacity="0.3"/><circle cx="235" cy="49" r="2.4" opacity="0.48"/><circle cx="178" cy="308" r="1.8" opacity="0.54"/><circle cx="263" cy="403" r="2.4" opacity="0.54"/><circle cx="186" cy="406" r="3.3" opacity="0.42"/><circle cx="395" cy="194" r="2.4" opacity="0.24"/><circle cx="186" cy="134" r="3.0" opacity="0.6"/><circle cx="297" cy="168" r="1.8" opacity="0.3"/><circle cx="22" cy="383" r="3.3" opacity="0.6"/><circle cx="0" cy="211" r="3.3" opacity="0.6"/><circle cx="171" cy="59" r="2.2" opacity="0.3"/><circle cx="359" cy="368" r="3.3" opacity="0.24"/><circle cx="379" cy="21" r="2.2" opacity="0.36"/><circle cx="392" cy="20" r="2.6" opacity="0.3"/><circle cx="431" cy="285" r="3.0" opacity="0.24"/><circle cx="68" cy="162" r="2.4" opacity="0.54"/><circle cx="179" cy="427" r="1.8" opacity="0.18"/><circle cx="370" cy="538" r="2.6" opacity="0.48"/><circle cx="443" cy="477" r="3.3" opacity="0.68"/><circle cx="162" cy="133" r="3.0" opacity="0.42"/><circle cx="38" cy="105" r="3.0" opacity="0.24"/><circle cx="177" cy="360" r="2.8" opacity="0.36"/><circle cx="339" cy="376" r="3.0" opacity="0.48"/><circle cx="470" cy="107" r="2.6" opacity="0.68"/><circle cx="46" cy="268" r="2.4" opacity="0.42"/><circle cx="527" cy="105" r="3.3" opacity="0.36"/><circle cx="182" cy="480" r="2.0" opacity="0.6"/><circle cx="420" cy="484" r="3.3" opacity="0.54"/><circle cx="626" cy="30" r="2.2" opacity="0.54"/><circle cx="37" cy="13" r="2.2" opacity="0.54"/><circle cx="36" cy="32" r="3.0" opacity="0.6"/><circle cx="618" cy="477" r="2.0" opacity="0.24"/><circle cx="641" cy="178" r="2.2" opacity="0.68"/><circle cx="513" cy="17" r="3.0" opacity="0.48"/><circle cx="678" cy="239" r="2.0" opacity="0.18"/><circle cx="54" cy="44" r="3.0" opacity="0.24"/><circle cx="386" cy="410" r="3.0" opacity="0.48"/><circle cx="529" cy="167" r="3.0" opacity="0.24"/><circle cx="34" cy="256" r="2.8" opacity="0.68"/><circle cx="633" cy="104" r="2.8" opacity="0.6"/><circle cx="21" cy="222" r="3.0" opacity="0.18"/><circle cx="258" cy="251" r="1.8" opacity="0.42"/><circle cx="134" cy="34" r="2.8" opacity="0.48"/><circle cx="187" cy="517" r="1.8" opacity="0.42"/><circle cx="514" cy="372" r="2.6" opacity="0.42"/><circle cx="3" cy="408" r="2.0" opacity="0.18"/><circle cx="568" cy="58" r="3.3" opacity="0.54"/><circle cx="543" cy="493" r="3.3" opacity="0.3"/><circle cx="639" cy="99" r="2.6" opacity="0.3"/><circle cx="418" cy="177" r="2.8" opacity="0.6"/><circle cx="249" cy="422" r="2.0" opacity="0.68"/><circle cx="136" cy="407" r="2.4" opacity="0.54"/><circle cx="45" cy="18" r="2.8" opacity="0.3"/><circle cx="674" cy="477" r="2.0" opacity="0.42"/><circle cx="430" cy="113" r="3.0" opacity="0.6"/><circle cx="680" cy="525" r="2.2" opacity="0.36"/><circle cx="91" cy="249" r="2.4" opacity="0.68"/><circle cx="583" cy="359" r="2.0" opacity="0.42"/><circle cx="202" cy="306" r="2.8" opacity="0.42"/><circle cx="508" cy="108" r="2.4" opacity="0.3"/><circle cx="169" cy="83" r="2.4" opacity="0.48"/><circle cx="45" cy="136" r="2.4" opacity="0.68"/><circle cx="362" cy="351" r="2.0" opacity="0.6"/><circle cx="682" cy="55" r="3.3" opacity="0.36"/><circle cx="578" cy="494" r="1.8" opacity="0.42"/><circle cx="160" cy="27" r="2.4" opacity="0.24"/><circle cx="256" cy="468" r="3.3" opacity="0.42"/><circle cx="533" cy="359" r="1.8" opacity="0.24"/><circle cx="439" cy="383" r="2.8" opacity="0.36"/><circle cx="26" cy="184" r="1.8" opacity="0.36"/><circle cx="688" cy="21" r="2.4" opacity="0.18"/><circle cx="563" cy="221" r="2.8" opacity="0.3"/><circle cx="427" cy="42" r="1.8" opacity="0.6"/><circle cx="377" cy="34" r="2.0" opacity="0.54"/><circle cx="457" cy="83" r="2.0" opacity="0.3"/><circle cx="274" cy="146" r="2.6" opacity="0.42"/><circle cx="287" cy="28" r="2.8" opacity="0.54"/><circle cx="287" cy="467" r="2.8" opacity="0.36"/><circle cx="269" cy="219" r="1.8" opacity="0.54"/><circle cx="620" cy="229" r="2.0" opacity="0.54"/><circle cx="398" cy="197" r="2.2" opacity="0.3"/><circle cx="10" cy="298" r="3.0" opacity="0.24"/><circle cx="394" cy="501" r="2.2" opacity="0.3"/><circle cx="239" cy="87" r="2.2" opacity="0.24"/><circle cx="75" cy="265" r="2.4" opacity="0.42"/><circle cx="87" cy="509" r="3.3" opacity="0.48"/><circle cx="37" cy="500" r="3.0" opacity="0.24"/><circle cx="622" cy="335" r="2.2" opacity="0.36"/><circle cx="427" cy="332" r="2.4" opacity="0.6"/><circle cx="126" cy="118" r="3.0" opacity="0.68"/><circle cx="108" cy="194" r="2.2" opacity="0.36"/><circle cx="668" cy="440" r="2.4" opacity="0.18"/><circle cx="608" cy="455" r="1.8" opacity="0.48"/><circle cx="81" cy="324" r="2.6" opacity="0.54"/><circle cx="212" cy="135" r="3.0" opacity="0.48"/><circle cx="307" cy="237" r="1.8" opacity="0.18"/><circle cx="426" cy="264" r="2.4" opacity="0.6"/><circle cx="525" cy="421" r="3.3" opacity="0.3"/><circle cx="558" cy="216" r="2.0" opacity="0.3"/><circle cx="247" cy="197" r="3.3" opacity="0.68"/><circle cx="351" cy="22" r="2.2" opacity="0.24"/><circle cx="634" cy="169" r="2.0" opacity="0.18"/><circle cx="517" cy="483" r="2.2" opacity="0.18"/><circle cx="590" cy="538" r="2.0" opacity="0.36"/><circle cx="91" cy="478" r="2.6" opacity="0.3"/><circle cx="472" cy="389" r="2.4" opacity="0.24"/><circle cx="573" cy="330" r="2.6" opacity="0.3"/><circle cx="223" cy="331" r="3.3" opacity="0.3"/><circle cx="175" cy="521" r="3.3" opacity="0.36"/><circle cx="407" cy="333" r="2.4" opacity="0.48"/><circle cx="256" cy="107" r="3.0" opacity="0.3"/><circle cx="438" cy="150" r="2.8" opacity="0.54"/><circle cx="116" cy="424" r="2.0" opacity="0.68"/><circle cx="33" cy="463" r="3.3" opacity="0.68"/><circle cx="359" cy="372" r="2.0" opacity="0.42"/><circle cx="683" cy="340" r="3.0" opacity="0.48"/><circle cx="182" cy="535" r="2.2" opacity="0.48"/><circle cx="228" cy="44" r="2.4" opacity="0.3"/><circle cx="423" cy="517" r="2.6" opacity="0.68"/><circle cx="175" cy="345" r="2.8" opacity="0.18"/><circle cx="514" cy="120" r="2.6" opacity="0.54"/><circle cx="287" cy="197" r="1.8" opacity="0.3"/><circle cx="336" cy="331" r="1.8" opacity="0.18"/><circle cx="37" cy="306" r="2.6" opacity="0.24"/><circle cx="360" cy="288" r="3.0" opacity="0.42"/><circle cx="405" cy="110" r="3.3" opacity="0.3"/><circle cx="93" cy="506" r="2.4" opacity="0.3"/><circle cx="310" cy="34" r="2.2" opacity="0.42"/><circle cx="277" cy="143" r="1.8" opacity="0.18"/><circle cx="444" cy="304" r="2.8" opacity="0.6"/><circle cx="414" cy="279" r="3.3" opacity="0.36"/><circle cx="114" cy="0" r="1.8" opacity="0.68"/><circle cx="17" cy="100" r="2.2" opacity="0.18"/><circle cx="627" cy="57" r="2.4" opacity="0.3"/><circle cx="284" cy="280" r="3.0" opacity="0.3"/><circle cx="350" cy="34" r="1.8" opacity="0.6"/><circle cx="492" cy="3" r="3.0" opacity="0.6"/><circle cx="55" cy="354" r="2.2" opacity="0.36"/><circle cx="686" cy="141" r="1.8" opacity="0.24"/><circle cx="231" cy="405" r="2.6" opacity="0.18"/><circle cx="183" cy="299" r="3.0" opacity="0.68"/><circle cx="669" cy="160" r="2.4" opacity="0.24"/><circle cx="605" cy="8" r="2.6" opacity="0.36"/><circle cx="579" cy="109" r="2.2" opacity="0.48"/><circle cx="132" cy="210" r="2.4" opacity="0.54"/><circle cx="624" cy="341" r="3.3" opacity="0.6"/><circle cx="578" cy="377" r="1.8" opacity="0.54"/><circle cx="658" cy="126" r="2.6" opacity="0.36"/><circle cx="269" cy="316" r="2.2" opacity="0.3"/><circle cx="23" cy="60" r="2.2" opacity="0.48"/><circle cx="672" cy="378" r="1.8" opacity="0.18"/><circle cx="95" cy="348" r="1.8" opacity="0.24"/><circle cx="507" cy="36" r="2.8" opacity="0.36"/><circle cx="562" cy="443" r="2.0" opacity="0.54"/><circle cx="74" cy="111" r="2.0" opacity="0.18"/><circle cx="24" cy="458" r="2.0" opacity="0.42"/><circle cx="328" cy="72" r="2.4" opacity="0.42"/><circle cx="220" cy="229" r="1.8" opacity="0.48"/><circle cx="177" cy="153" r="2.8" opacity="0.48"/><circle cx="529" cy="325" r="3.3" opacity="0.42"/><circle cx="425" cy="17" r="3.0" opacity="0.18"/><circle cx="300" cy="417" r="2.8" opacity="0.6"/><circle cx="485" cy="290" r="2.4" opacity="0.24"/><circle cx="395" cy="155" r="3.0" opacity="0.18"/><circle cx="360" cy="156" r="1.8" opacity="0.18"/><circle cx="239" cy="52" r="2.2" opacity="0.6"/><circle cx="408" cy="517" r="2.6" opacity="0.3"/><circle cx="195" cy="116" r="2.4" opacity="0.6"/><circle cx="114" cy="507" r="2.0" opacity="0.6"/><circle cx="542" cy="376" r="2.0" opacity="0.48"/><circle cx="245" cy="217" r="3.0" opacity="0.24"/><circle cx="290" cy="349" r="2.8" opacity="0.36"/><circle cx="209" cy="231" r="2.2" opacity="0.54"/><circle cx="676" cy="341" r="3.3" opacity="0.3"/><circle cx="366" cy="407" r="1.8" opacity="0.48"/><circle cx="400" cy="282" r="3.3" opacity="0.68"/><circle cx="510" cy="92" r="3.3" opacity="0.42"/><circle cx="398" cy="68" r="3.3" opacity="0.36"/><circle cx="349" cy="144" r="2.2" opacity="0.3"/><circle cx="671" cy="391" r="2.8" opacity="0.3"/><circle cx="163" cy="516" r="2.6" opacity="0.24"/><circle cx="113" cy="355" r="2.4" opacity="0.54"/><circle cx="104" cy="80" r="2.6" opacity="0.42"/><circle cx="299" cy="106" r="2.0" opacity="0.42"/><circle cx="142" cy="210" r="1.8" opacity="0.18"/><circle cx="275" cy="427" r="2.4" opacity="0.68"/></g></pattern><radialGradient id="sg"><stop offset="0" stop-color="#fff"/><stop offset="0.35" stop-color="#fff" stop-opacity="0.85"/><stop offset="1" stop-color="#fff" stop-opacity="0"/></radialGradient></defs><rect x="65" y="68" width="2063" height="1080" fill="#000"/><rect x="65" y="68" width="2063" height="1080" fill="url(#st)"/><g id="digits"><text transform="translate(870.3 770.2) rotate(-9.32) scale(1.1 1)" font-family="Liberation Sans, sans-serif" font-size="572" fill="#fff" stroke="#fff" stroke-width="11" stroke-linejoin="miter" stroke-miterlimit="10">4</text><text transform="translate(1404.7 597.9) rotate(-6.5) scale(0.93 1)" font-family="Liberation Sans, sans-serif" font-size="568" fill="#fff" stroke="#fff" stroke-width="18" stroke-linejoin="miter" stroke-miterlimit="10">0</text><text transform="translate(1499.5 900.9) rotate(20.45) scale(1.1 1)" font-family="Liberation Sans, sans-serif" font-size="572" fill="#fff" stroke="#fff" stroke-width="11" stroke-linejoin="miter" stroke-miterlimit="10">4</text></g><g id="astro"><path d="M1458.0 632.0C1458.8 634.2 1460.7 640.0 1463.0 645.0C1465.3 650.0 1468.2 655.7 1472.0 662.0C1475.8 668.3 1482.2 674.7 1486.0 683.0C1489.8 691.3 1493.8 702.8 1495.0 712.0C1496.2 721.2 1495.8 731.0 1493.0 738.0C1490.2 745.0 1484.2 750.7 1478.0 754.0C1471.8 757.3 1463.0 758.5 1456.0 758.0C1449.0 757.5 1441.2 753.2 1436.0 751.0C1430.8 748.8 1426.8 746.0 1425.0 745.0" fill="none" stroke="#1c2125" stroke-width="17" stroke-linecap="round" stroke-linejoin="round" /><path d="M1458.0 632.0C1458.8 634.2 1460.7 640.0 1463.0 645.0C1465.3 650.0 1468.2 655.7 1472.0 662.0C1475.8 668.3 1482.2 674.7 1486.0 683.0C1489.8 691.3 1493.8 702.8 1495.0 712.0C1496.2 721.2 1495.8 731.0 1493.0 738.0C1490.2 745.0 1484.2 750.7 1478.0 754.0C1471.8 757.3 1463.0 758.5 1456.0 758.0C1449.0 757.5 1441.2 753.2 1436.0 751.0C1430.8 748.8 1426.8 746.0 1425.0 745.0" fill="none" stroke="#fff" stroke-width="9" stroke-linecap="round" stroke-linejoin="round" /><path d="M1424 372L1461 376.500Q1476 378.500 1479 393L1488 442L1496 500L1440 520L1420 420Z" fill="#dcdcdf" stroke="#1c2125" stroke-width="5" stroke-linejoin="round"/><path d="M1436 396Q1440 386 1450 387L1464 389Q1471 391 1473 399L1481 446L1466 470Z" fill="#f1f1f2" stroke="none"/><path d="M1432.0 412.0C1433.0 408.7 1434.7 396.0 1438.0 392.0C1441.3 388.0 1449.7 388.7 1452.0 388.0" fill="none" stroke="#1c2125" stroke-width="3.4" stroke-linecap="round" stroke-linejoin="round" /><path d="M1264.0 420.0C1259.8 419.7 1249.7 428.5 1243.0 434.0C1236.3 439.5 1229.7 446.2 1224.0 453.0C1218.3 459.8 1214.0 467.0 1209.0 475.0C1204.0 483.0 1199.2 492.8 1194.0 501.0C1188.8 509.2 1182.3 518.2 1178.0 524.0C1173.7 529.8 1167.7 530.0 1168.0 536.0C1168.3 542.0 1172.2 555.0 1180.0 560.0C1187.8 565.0 1204.5 566.7 1215.0 566.0C1225.5 565.3 1236.2 561.0 1243.0 556.0C1249.8 551.0 1252.7 542.0 1256.0 536.0C1259.3 530.0 1261.8 526.0 1263.0 520.0C1264.2 514.0 1263.0 509.7 1263.0 500.0C1263.0 490.3 1262.2 472.7 1263.0 462.0C1263.8 451.3 1267.8 443.0 1268.0 436.0C1268.2 429.0 1268.2 420.3 1264.0 420.0Z" fill="#fff" stroke="#1c2125" stroke-width="5" stroke-linejoin="round" stroke-linecap="round" /><path d="M1244.0 500.0C1246.0 498.0 1248.7 505.0 1250.0 510.0C1251.3 515.0 1253.0 523.3 1252.0 530.0C1251.0 536.7 1247.0 547.3 1244.0 550.0C1241.0 552.7 1235.0 550.7 1234.0 546.0C1233.0 541.3 1236.3 529.7 1238.0 522.0C1239.7 514.3 1242.0 502.0 1244.0 500.0Z" fill="#d2d3d6"/><path d="M1264.0 420.0C1259.8 419.7 1249.7 428.5 1243.0 434.0C1236.3 439.5 1229.7 446.2 1224.0 453.0C1218.3 459.8 1214.0 467.0 1209.0 475.0C1204.0 483.0 1199.2 492.8 1194.0 501.0C1188.8 509.2 1182.3 518.2 1178.0 524.0C1173.7 529.8 1167.7 530.0 1168.0 536.0C1168.3 542.0 1172.2 555.0 1180.0 560.0C1187.8 565.0 1204.5 566.7 1215.0 566.0C1225.5 565.3 1236.2 561.0 1243.0 556.0C1249.8 551.0 1252.7 542.0 1256.0 536.0C1259.3 530.0 1261.8 526.0 1263.0 520.0C1264.2 514.0 1263.0 509.7 1263.0 500.0C1263.0 490.3 1262.2 472.7 1263.0 462.0C1263.8 451.3 1267.8 443.0 1268.0 436.0C1268.2 429.0 1268.2 420.3 1264.0 420.0Z" fill="none" stroke="#1c2125" stroke-width="5" stroke-linejoin="round" stroke-linecap="round" /><path d="M1243.6 457.0C1244.0 459.5 1244.9 467.2 1246.0 472.0C1247.1 476.8 1249.3 483.7 1250.0 486.0" fill="none" stroke="#1c2125" stroke-width="3" stroke-linecap="round" stroke-linejoin="round" /><path d="M1233.0 470.0C1233.8 472.3 1236.0 480.0 1238.0 484.0C1240.0 488.0 1243.8 492.3 1245.0 494.0" fill="none" stroke="#1c2125" stroke-width="3" stroke-linecap="round" stroke-linejoin="round" /><path d="M1225.0 500.0C1226.8 501.7 1232.9 506.2 1236.0 510.0C1239.1 513.8 1242.3 520.8 1243.6 523.0" fill="none" stroke="#1c2125" stroke-width="3" stroke-linecap="round" stroke-linejoin="round" /><path d="M1225.0 527.0C1225.7 528.2 1227.9 531.7 1229.0 534.0C1230.1 536.3 1231.2 539.8 1231.7 541.0" fill="none" stroke="#1c2125" stroke-width="3" stroke-linecap="round" stroke-linejoin="round" /><path d="M1187.0 517.5C1189.0 517.8 1195.1 517.7 1199.0 519.0C1202.9 520.3 1208.7 524.3 1210.6 525.4" fill="none" stroke="#1c2125" stroke-width="3.4" stroke-linecap="round" stroke-linejoin="round" /><path d="M1183.0 523.0C1185.8 523.7 1195.5 525.2 1200.0 527.0C1204.5 528.8 1207.2 531.4 1210.0 534.0C1212.8 536.6 1215.8 541.2 1217.0 542.6" fill="none" stroke="#1c2125" stroke-width="3.4" stroke-linecap="round" stroke-linejoin="round" /><path d="M1262.0 680.0L1335.0 688.0L1326.0 724.0L1312.0 728.0L1284.0 700.0Z" fill="#d2d3d6" stroke="#1c2125" stroke-width="0" stroke-linejoin="round" /><path d="M1330.0 690.0C1338.3 682.0 1356.3 676.7 1370.0 672.0C1383.7 667.3 1401.0 662.7 1412.0 662.0C1423.0 661.3 1431.2 662.0 1436.0 668.0C1440.8 674.0 1441.3 685.7 1441.0 698.0C1440.7 710.3 1437.5 730.0 1434.0 742.0C1430.5 754.0 1423.3 762.7 1420.0 770.0C1416.7 777.3 1413.3 779.0 1414.0 786.0C1414.7 793.0 1420.0 800.3 1424.0 812.0C1428.0 823.7 1433.7 844.7 1438.0 856.0C1442.3 867.3 1448.3 870.0 1450.0 880.0C1451.7 890.0 1450.2 903.3 1448.0 916.0C1445.8 928.7 1442.3 946.0 1437.0 956.0C1431.7 966.0 1424.2 973.0 1416.0 976.0C1407.8 979.0 1395.2 978.0 1388.0 974.0C1380.8 970.0 1375.2 963.7 1373.0 952.0C1370.8 940.3 1375.2 915.3 1375.0 904.0C1374.8 892.7 1376.2 891.7 1372.0 884.0C1367.8 876.3 1357.3 868.2 1350.0 858.0C1342.7 847.8 1333.5 833.8 1328.0 823.0C1322.5 812.2 1319.0 802.8 1317.0 793.0C1315.0 783.2 1315.5 776.2 1316.0 764.0C1316.5 751.8 1317.7 732.3 1320.0 720.0C1322.3 707.7 1321.7 698.0 1330.0 690.0Z" fill="#fff" stroke="#1c2125" stroke-width="5" stroke-linejoin="round" stroke-linecap="round" /><path d="M1436.0 672.0C1438.7 673.7 1440.5 688.3 1440.0 700.0C1439.5 711.7 1436.5 730.3 1433.0 742.0C1429.5 753.7 1422.3 762.7 1419.0 770.0C1415.7 777.3 1412.3 779.0 1413.0 786.0C1413.7 793.0 1419.0 800.3 1423.0 812.0C1427.0 823.7 1433.0 844.7 1437.0 856.0C1441.0 867.3 1445.5 870.0 1447.0 880.0C1448.5 890.0 1447.8 904.0 1446.0 916.0C1444.2 928.0 1440.3 943.3 1436.0 952.0C1431.7 960.7 1421.7 970.0 1420.0 968.0C1418.3 966.0 1424.0 951.3 1426.0 940.0C1428.0 928.7 1433.3 913.0 1432.0 900.0C1430.7 887.0 1423.7 875.7 1418.0 862.0C1412.3 848.3 1402.3 830.0 1398.0 818.0C1393.7 806.0 1391.0 799.7 1392.0 790.0C1393.0 780.3 1399.7 771.7 1404.0 760.0C1408.3 748.3 1414.7 731.7 1418.0 720.0C1421.3 708.3 1421.0 698.0 1424.0 690.0C1427.0 682.0 1433.3 670.3 1436.0 672.0Z" fill="#d2d3d6"/><path d="M1332.0 694.0C1338.7 686.3 1357.0 680.7 1370.0 676.0C1383.0 671.3 1401.7 663.7 1410.0 666.0C1418.3 668.3 1425.0 685.3 1420.0 690.0C1415.0 694.7 1392.0 691.0 1380.0 694.0C1368.0 697.0 1356.3 703.3 1348.0 708.0C1339.7 712.7 1332.7 724.3 1330.0 722.0C1327.3 719.7 1325.3 701.7 1332.0 694.0Z" fill="#d2d3d6"/><path d="M1330.0 690.0C1338.3 682.0 1356.3 676.7 1370.0 672.0C1383.7 667.3 1401.0 662.7 1412.0 662.0C1423.0 661.3 1431.2 662.0 1436.0 668.0C1440.8 674.0 1441.3 685.7 1441.0 698.0C1440.7 710.3 1437.5 730.0 1434.0 742.0C1430.5 754.0 1423.3 762.7 1420.0 770.0C1416.7 777.3 1413.3 779.0 1414.0 786.0C1414.7 793.0 1420.0 800.3 1424.0 812.0C1428.0 823.7 1433.7 844.7 1438.0 856.0C1442.3 867.3 1448.3 870.0 1450.0 880.0C1451.7 890.0 1450.2 903.3 1448.0 916.0C1445.8 928.7 1442.3 946.0 1437.0 956.0C1431.7 966.0 1424.2 973.0 1416.0 976.0C1407.8 979.0 1395.2 978.0 1388.0 974.0C1380.8 970.0 1375.2 963.7 1373.0 952.0C1370.8 940.3 1375.2 915.3 1375.0 904.0C1374.8 892.7 1376.2 891.7 1372.0 884.0C1367.8 876.3 1357.3 868.2 1350.0 858.0C1342.7 847.8 1333.5 833.8 1328.0 823.0C1322.5 812.2 1319.0 802.8 1317.0 793.0C1315.0 783.2 1315.5 776.2 1316.0 764.0C1316.5 751.8 1317.7 732.3 1320.0 720.0C1322.3 707.7 1321.7 698.0 1330.0 690.0Z" fill="none" stroke="#1c2125" stroke-width="5" stroke-linejoin="round" stroke-linecap="round" /><path d="M1317.0 772.0C1320.8 768.7 1330.3 756.3 1340.0 752.0C1349.7 747.7 1364.2 745.0 1375.0 746.0C1385.8 747.0 1398.2 752.0 1405.0 758.0C1411.8 764.0 1414.2 778.0 1416.0 782.0" fill="none" stroke="#1c2125" stroke-width="4.2" stroke-linecap="round" stroke-linejoin="round" /><path d="M1318.0 800.0C1322.5 802.7 1334.7 813.7 1345.0 816.0C1355.3 818.3 1370.0 816.7 1380.0 814.0C1390.0 811.3 1399.0 805.0 1405.0 800.0C1411.0 795.0 1414.2 786.7 1416.0 784.0" fill="none" stroke="#1c2125" stroke-width="4.2" stroke-linecap="round" stroke-linejoin="round" /><path d="M1324.0 818.0C1328.7 821.0 1341.3 833.7 1352.0 836.0C1362.7 838.3 1376.7 836.0 1388.0 832.0C1399.3 828.0 1414.7 815.3 1420.0 812.0" fill="none" stroke="#1c2125" stroke-width="4.2" stroke-linecap="round" stroke-linejoin="round" /><path d="M1338.0 842.0C1342.3 844.7 1353.7 856.3 1364.0 858.0C1374.3 859.7 1389.0 855.7 1400.0 852.0C1411.0 848.3 1425.0 838.7 1430.0 836.0" fill="none" stroke="#1c2125" stroke-width="4.2" stroke-linecap="round" stroke-linejoin="round" /><path d="M1354.0 864.0C1358.3 866.7 1370.0 878.0 1380.0 880.0C1390.0 882.0 1404.0 879.3 1414.0 876.0C1424.0 872.7 1435.7 862.7 1440.0 860.0" fill="none" stroke="#1c2125" stroke-width="4.2" stroke-linecap="round" stroke-linejoin="round" /><path d="M1372.0 886.0C1376.3 888.0 1388.7 896.7 1398.0 898.0C1407.3 899.3 1419.5 897.0 1428.0 894.0C1436.5 891.0 1445.5 882.3 1449.0 880.0" fill="none" stroke="#1c2125" stroke-width="4.2" stroke-linecap="round" stroke-linejoin="round" /><path d="M1384.0 932.0C1385.7 931.7 1390.7 930.0 1394.0 930.0C1397.3 930.0 1402.3 931.7 1404.0 932.0" fill="none" stroke="#1c2125" stroke-width="2.8" stroke-linecap="round" stroke-linejoin="round" /><path d="M1443.0 886.0C1442.7 891.0 1443.0 905.2 1441.0 916.0C1439.0 926.8 1435.7 942.2 1431.0 951.0C1426.3 959.8 1419.5 966.2 1413.0 969.0C1406.5 971.8 1395.5 968.2 1392.0 968.0" fill="none" stroke="#1c2125" stroke-width="2.8" stroke-linecap="round" stroke-linejoin="round" /><path d="M1352.0 700.0C1355.3 699.0 1365.3 695.3 1372.0 694.0C1378.7 692.7 1388.7 692.3 1392.0 692.0" fill="none" stroke="#1c2125" stroke-width="2.8" stroke-linecap="round" stroke-linejoin="round" /><path d="M1214.0 668.0C1222.3 667.0 1237.3 672.3 1250.0 676.0C1262.7 679.7 1279.5 682.3 1290.0 690.0C1300.5 697.7 1314.7 711.8 1313.0 722.0C1311.3 732.2 1290.2 742.7 1280.0 751.0C1269.8 759.3 1254.5 766.0 1252.0 772.0C1249.5 778.0 1260.5 781.0 1265.0 787.0C1269.5 793.0 1274.8 800.8 1279.0 808.0C1283.2 815.2 1286.5 824.7 1290.0 830.0C1293.5 835.3 1297.7 836.0 1300.0 840.0C1302.3 844.0 1305.2 848.0 1304.0 854.0C1302.8 860.0 1298.8 865.5 1293.0 876.0C1287.2 886.5 1276.5 907.0 1269.0 917.0C1261.5 927.0 1254.8 933.5 1248.0 936.0C1241.2 938.5 1232.8 935.7 1228.0 932.0C1223.2 928.3 1219.7 921.0 1219.0 914.0C1218.3 907.0 1222.0 898.8 1224.0 890.0C1226.0 881.2 1235.5 870.5 1231.0 861.0C1226.5 851.5 1206.8 843.5 1197.0 833.0C1187.2 822.5 1178.0 808.8 1172.0 798.0C1166.0 787.2 1162.2 777.0 1161.0 768.0C1159.8 759.0 1161.2 754.5 1165.0 744.0C1168.8 733.5 1178.2 715.3 1184.0 705.0C1189.8 694.7 1195.0 688.2 1200.0 682.0C1205.0 675.8 1205.7 669.0 1214.0 668.0Z" fill="#fff" stroke="#1c2125" stroke-width="5" stroke-linejoin="round" stroke-linecap="round" /><path d="M1258.0 700.0C1264.0 695.0 1281.2 690.3 1290.0 694.0C1298.8 697.7 1312.7 712.7 1311.0 722.0C1309.3 731.3 1289.5 742.0 1280.0 750.0C1270.5 758.0 1256.3 763.8 1254.0 770.0C1251.7 776.2 1261.8 780.7 1266.0 787.0C1270.2 793.3 1275.0 800.8 1279.0 808.0C1283.0 815.2 1286.5 824.3 1290.0 830.0C1293.5 835.7 1298.0 837.7 1300.0 842.0C1302.0 846.3 1303.3 850.3 1302.0 856.0C1300.7 861.7 1297.7 866.0 1292.0 876.0C1286.3 886.0 1275.0 906.7 1268.0 916.0C1261.0 925.3 1251.0 934.7 1250.0 932.0C1249.0 929.3 1258.0 910.7 1262.0 900.0C1266.0 889.3 1273.0 878.3 1274.0 868.0C1275.0 857.7 1271.7 847.3 1268.0 838.0C1264.3 828.7 1257.3 820.0 1252.0 812.0C1246.7 804.0 1241.0 796.0 1236.0 790.0C1231.0 784.0 1221.3 782.7 1222.0 776.0C1222.7 769.3 1234.7 758.7 1240.0 750.0C1245.3 741.3 1251.0 732.3 1254.0 724.0C1257.0 715.7 1252.0 705.0 1258.0 700.0Z" fill="#d2d3d6"/><path d="M1214.0 668.0C1222.3 667.0 1237.3 672.3 1250.0 676.0C1262.7 679.7 1279.5 682.3 1290.0 690.0C1300.5 697.7 1314.7 711.8 1313.0 722.0C1311.3 732.2 1290.2 742.7 1280.0 751.0C1269.8 759.3 1254.5 766.0 1252.0 772.0C1249.5 778.0 1260.5 781.0 1265.0 787.0C1269.5 793.0 1274.8 800.8 1279.0 808.0C1283.2 815.2 1286.5 824.7 1290.0 830.0C1293.5 835.3 1297.7 836.0 1300.0 840.0C1302.3 844.0 1305.2 848.0 1304.0 854.0C1302.8 860.0 1298.8 865.5 1293.0 876.0C1287.2 886.5 1276.5 907.0 1269.0 917.0C1261.5 927.0 1254.8 933.5 1248.0 936.0C1241.2 938.5 1232.8 935.7 1228.0 932.0C1223.2 928.3 1219.7 921.0 1219.0 914.0C1218.3 907.0 1222.0 898.8 1224.0 890.0C1226.0 881.2 1235.5 870.5 1231.0 861.0C1226.5 851.5 1206.8 843.5 1197.0 833.0C1187.2 822.5 1178.0 808.8 1172.0 798.0C1166.0 787.2 1162.2 777.0 1161.0 768.0C1159.8 759.0 1161.2 754.5 1165.0 744.0C1168.8 733.5 1178.2 715.3 1184.0 705.0C1189.8 694.7 1195.0 688.2 1200.0 682.0C1205.0 675.8 1205.7 669.0 1214.0 668.0Z" fill="none" stroke="#1c2125" stroke-width="5" stroke-linejoin="round" stroke-linecap="round" /><path d="M1172.0 734.0C1176.0 732.7 1187.7 726.0 1196.0 726.0C1204.3 726.0 1214.3 729.7 1222.0 734.0C1229.7 738.3 1237.3 746.0 1242.0 752.0C1246.7 758.0 1248.7 767.0 1250.0 770.0" fill="none" stroke="#1c2125" stroke-width="4.2" stroke-linecap="round" stroke-linejoin="round" /><path d="M1164.0 780.0C1168.7 781.7 1182.3 789.0 1192.0 790.0C1201.7 791.0 1213.0 788.7 1222.0 786.0C1231.0 783.3 1242.0 776.0 1246.0 774.0" fill="none" stroke="#1c2125" stroke-width="4.2" stroke-linecap="round" stroke-linejoin="round" /><path d="M1176.0 804.0C1180.7 805.3 1194.3 812.0 1204.0 812.0C1213.7 812.0 1225.3 808.7 1234.0 804.0C1242.7 799.3 1252.3 787.3 1256.0 784.0" fill="none" stroke="#1c2125" stroke-width="4.2" stroke-linecap="round" stroke-linejoin="round" /><path d="M1190.0 826.0C1194.7 827.0 1208.7 832.7 1218.0 832.0C1227.3 831.3 1237.7 827.3 1246.0 822.0C1254.3 816.7 1264.3 803.7 1268.0 800.0" fill="none" stroke="#1c2125" stroke-width="4.2" stroke-linecap="round" stroke-linejoin="round" /><path d="M1208.0 844.0C1212.7 844.7 1227.0 849.0 1236.0 848.0C1245.0 847.0 1254.3 843.0 1262.0 838.0C1269.7 833.0 1278.7 821.3 1282.0 818.0" fill="none" stroke="#1c2125" stroke-width="4.2" stroke-linecap="round" stroke-linejoin="round" /><path d="M1232.0 861.0C1236.0 861.2 1248.0 863.5 1256.0 862.0C1264.0 860.5 1273.3 856.3 1280.0 852.0C1286.7 847.7 1293.3 838.7 1296.0 836.0" fill="none" stroke="#1c2125" stroke-width="4.2" stroke-linecap="round" stroke-linejoin="round" /><path d="M1232.0 893.0C1233.7 893.8 1238.7 897.0 1242.0 898.0C1245.3 899.0 1250.3 898.8 1252.0 899.0" fill="none" stroke="#1c2125" stroke-width="2.8" stroke-linecap="round" stroke-linejoin="round" /><path d="M1226.0 924.0C1228.7 924.8 1236.2 931.2 1242.0 929.0C1247.8 926.8 1254.0 920.5 1261.0 911.0C1268.0 901.5 1278.2 882.5 1284.0 872.0C1289.8 861.5 1294.0 852.0 1296.0 848.0" fill="none" stroke="#1c2125" stroke-width="2.8" stroke-linecap="round" stroke-linejoin="round" /><path d="M1288.0 700.0C1289.3 702.0 1292.7 708.3 1296.0 712.0C1299.3 715.7 1306.0 720.3 1308.0 722.0" fill="none" stroke="#1c2125" stroke-width="2.8" stroke-linecap="round" stroke-linejoin="round" /><path d="M1296.0 694.0C1297.7 696.3 1302.3 704.3 1306.0 708.0C1309.7 711.7 1316.0 714.7 1318.0 716.0" fill="none" stroke="#1c2125" stroke-width="2.8" stroke-linecap="round" stroke-linejoin="round" /><path d="M1258.0 440.0C1264.7 433.7 1283.0 450.0 1300.0 452.0C1317.0 454.0 1341.7 454.3 1360.0 452.0C1378.3 449.7 1400.0 435.0 1410.0 438.0C1420.0 441.0 1419.7 456.3 1420.0 470.0C1420.3 483.7 1411.3 506.3 1412.0 520.0C1412.7 533.7 1422.7 538.7 1424.0 552.0C1425.3 565.3 1424.0 585.3 1420.0 600.0C1416.0 614.7 1406.7 628.0 1400.0 640.0C1393.3 652.0 1396.7 663.7 1380.0 672.0C1363.3 680.3 1318.7 689.3 1300.0 690.0C1281.3 690.7 1271.7 684.3 1268.0 676.0C1264.3 667.7 1277.7 654.3 1278.0 640.0C1278.3 625.7 1272.3 605.8 1270.0 590.0C1267.7 574.2 1265.7 561.7 1264.0 545.0C1262.3 528.3 1261.0 507.5 1260.0 490.0C1259.0 472.5 1251.3 446.3 1258.0 440.0Z" fill="#fff" stroke="#1c2125" stroke-width="5" stroke-linejoin="round" stroke-linecap="round" /><path d="M1384.0 470.0C1386.3 458.7 1393.3 456.0 1398.0 452.0C1402.7 448.0 1409.0 441.3 1412.0 446.0C1415.0 450.7 1416.7 467.7 1416.0 480.0C1415.3 492.3 1407.3 508.0 1408.0 520.0C1408.7 532.0 1418.7 538.7 1420.0 552.0C1421.3 565.3 1420.0 585.3 1416.0 600.0C1412.0 614.7 1403.3 629.3 1396.0 640.0C1388.7 650.7 1377.0 668.7 1372.0 664.0C1367.0 659.3 1366.0 629.3 1366.0 612.0C1366.0 594.7 1369.0 575.3 1372.0 560.0C1375.0 544.7 1382.0 535.0 1384.0 520.0C1386.0 505.0 1381.7 481.3 1384.0 470.0Z" fill="#d2d3d6"/><path d="M1284.0 604.0C1289.0 602.3 1307.0 610.3 1320.0 612.0C1333.0 613.7 1354.0 609.3 1362.0 614.0C1370.0 618.7 1373.3 636.7 1368.0 640.0C1362.7 643.3 1343.0 637.0 1330.0 634.0C1317.0 631.0 1297.7 627.0 1290.0 622.0C1282.3 617.0 1279.0 605.7 1284.0 604.0Z" fill="#d2d3d6"/><path d="M1272 470.500L1367 477.500Q1376.500 478.500 1376.500 488L1374.500 534Q1374 544 1364 543L1273 530.500Q1265 529.500 1265 521L1263.500 479Q1263.500 470 1272 470.500Z" fill="#fff" stroke="#1c2125" stroke-width="5" stroke-linejoin="round"/><path d="M1364 480Q1373 481 1373 489L1371.500 533Q1371 541 1363 540L1276 528L1276 522L1362 533Z" fill="#d2d3d6"/><path d="M1274.5 505.6C1287.1 507.1 1337.4 513.0 1350.0 514.5" fill="none" stroke="#1c2125" stroke-width="2.8" stroke-linecap="round" stroke-linejoin="round" /><path d="M1288 555.500L1354 566.500Q1361.500 568 1361.500 575L1360.500 594Q1360 602 1352 600.500L1287 589.500Q1280 588 1280 581L1281 562Q1281.500 554.500 1288 555.500Z" fill="#fff" stroke="#1c2125" stroke-width="5" stroke-linejoin="round"/><path d="M1288.0 567.0C1291.7 568.2 1302.0 572.3 1310.0 574.0C1318.0 575.7 1328.3 576.5 1336.0 577.0C1343.7 577.5 1352.7 577.0 1356.0 577.0" fill="none" stroke="#1c2125" stroke-width="2.8" stroke-linecap="round" stroke-linejoin="round" /><path d="M1262.0 470.0C1263.0 478.3 1266.3 503.3 1268.0 520.0C1269.7 536.7 1269.7 555.0 1272.0 570.0C1274.3 585.0 1280.3 603.3 1282.0 610.0" fill="none" stroke="#1c2125" stroke-width="2.2" stroke-linecap="round" stroke-linejoin="round" opacity="0"/><path d="M1250.0 384.0C1246.5 384.0 1249.0 409.7 1251.0 420.0C1253.0 430.3 1255.2 438.7 1262.0 446.0C1268.8 453.3 1279.8 459.8 1292.0 464.0C1304.2 468.2 1320.0 471.0 1335.0 471.0C1350.0 471.0 1368.5 468.0 1382.0 464.0C1395.5 460.0 1407.2 454.0 1416.0 447.0C1424.8 440.0 1431.5 430.2 1435.0 422.0C1438.5 413.8 1438.2 404.0 1437.0 398.0C1435.8 392.0 1434.2 382.3 1428.0 386.0C1421.8 389.7 1415.5 411.0 1400.0 420.0C1384.5 429.0 1356.3 440.0 1335.0 440.0C1313.7 440.0 1286.2 429.3 1272.0 420.0C1257.8 410.7 1253.5 384.0 1250.0 384.0Z" fill="#fff" stroke="#1c2125" stroke-width="5" stroke-linejoin="round" stroke-linecap="round" /><path d="M1300.0 452.0C1302.5 454.2 1321.7 459.0 1335.0 459.0C1348.3 459.0 1367.2 455.8 1380.0 452.0C1392.8 448.2 1403.7 442.7 1412.0 436.0C1420.3 429.3 1426.3 418.0 1430.0 412.0C1433.7 406.0 1434.3 403.3 1434.0 400.0C1433.7 396.7 1433.0 388.0 1428.0 392.0C1423.0 396.0 1415.3 415.7 1404.0 424.0C1392.7 432.3 1374.0 438.3 1360.0 442.0C1346.0 445.7 1330.0 444.3 1320.0 446.0C1310.0 447.7 1297.5 449.8 1300.0 452.0Z" fill="#d2d3d6"/><path d="M1270.5 426.0C1274.8 428.3 1286.2 436.7 1296.0 440.0C1305.8 443.3 1317.3 445.7 1329.0 446.0C1340.7 446.3 1354.5 444.7 1366.0 442.0C1377.5 439.3 1389.0 435.0 1398.0 430.0C1407.0 425.0 1414.7 417.3 1420.0 412.0C1425.3 406.7 1428.3 400.3 1430.0 398.0" fill="none" stroke="#1c2125" stroke-width="4.4" stroke-linecap="round" stroke-linejoin="round" /><path d="M1259.0 440.0C1264.2 442.7 1277.7 452.5 1290.0 456.0C1302.3 459.5 1318.7 461.2 1333.0 461.0C1347.3 460.8 1363.5 458.3 1376.0 455.0C1388.5 451.7 1399.3 446.8 1408.0 441.0C1416.7 435.2 1423.3 426.2 1428.0 420.0C1432.7 413.8 1434.7 406.7 1436.0 404.0" fill="none" stroke="#1c2125" stroke-width="4.4" stroke-linecap="round" stroke-linejoin="round" /><path d="M1338.0 259.0C1350.7 258.2 1363.2 260.2 1374.0 264.0C1384.8 267.8 1395.3 274.3 1403.0 282.0C1410.7 289.7 1416.2 299.5 1420.0 310.0C1423.8 320.5 1425.0 333.3 1426.0 345.0C1427.0 356.7 1427.0 370.5 1426.0 380.0C1425.0 389.5 1424.7 395.0 1420.0 402.0C1415.3 409.0 1408.0 416.3 1398.0 422.0C1388.0 427.7 1373.0 433.5 1360.0 436.0C1347.0 438.5 1332.0 438.3 1320.0 437.0C1308.0 435.7 1296.7 432.2 1288.0 428.0C1279.3 423.8 1273.2 419.2 1268.0 412.0C1262.8 404.8 1259.3 394.5 1257.0 385.0C1254.7 375.5 1253.8 365.5 1254.0 355.0C1254.2 344.5 1255.3 332.2 1258.0 322.0C1260.7 311.8 1263.3 302.8 1270.0 294.0C1276.7 285.2 1286.7 274.8 1298.0 269.0C1309.3 263.2 1325.3 259.8 1338.0 259.0Z" fill="#fff" stroke="#1c2125" stroke-width="5" stroke-linejoin="round" stroke-linecap="round" /><path d="M1398.0 300.0C1400.7 298.7 1408.3 313.7 1412.0 322.0C1415.7 330.3 1418.3 340.0 1420.0 350.0C1421.7 360.0 1422.7 373.7 1422.0 382.0C1421.3 390.3 1420.3 394.0 1416.0 400.0C1411.7 406.0 1405.0 412.7 1396.0 418.0C1387.0 423.3 1364.7 432.7 1362.0 432.0C1359.3 431.3 1374.7 420.7 1380.0 414.0C1385.3 407.3 1391.0 401.0 1394.0 392.0C1397.0 383.0 1397.7 370.3 1398.0 360.0C1398.3 349.7 1396.0 340.0 1396.0 330.0C1396.0 320.0 1395.3 301.3 1398.0 300.0Z" fill="#d2d3d6"/><ellipse cx="1326.500" cy="355.500" rx="69" ry="68.500" fill="#fff" stroke="#1c2125" stroke-width="5" transform="rotate(-8 1326.500 355.500)"/><ellipse cx="1322" cy="356" rx="63" ry="56.500" fill="#1f262b" stroke="#1c2125" stroke-width="3" transform="rotate(-6 1322 356)"/><path d="M1279.5 321.0C1278.8 324.2 1276.1 333.0 1275.0 340.0C1273.9 347.0 1273.3 359.2 1273.0 363.0" fill="none" stroke="#c8cbcd" stroke-width="9" stroke-linecap="round" stroke-linejoin="round" /><circle cx="1412" cy="355" r="21" fill="#fff" stroke="#1c2125" stroke-width="5"/><ellipse cx="1419.500" cy="357" rx="13.500" ry="19.500" fill="#dadadc" stroke="#1c2125" stroke-width="3" transform="rotate(-6 1419.500 357)"/><path d="M1257.0 609.0L1290.0 615.0L1372.0 650.0L1376.0 656.0L1269.0 690.0L1266.0 682.0Z" fill="#5a6068" stroke="#1c2125" stroke-width="5" stroke-linejoin="round" /><path d="M1268.0 680.5L1372.0 649.0L1375.0 655.0L1270.0 687.0Z" fill="#757b84" stroke="#1c2125" stroke-width="2.6" stroke-linejoin="round" /><path d="M1262.0 621.0L1302.0 633.0" stroke="#3c4248" stroke-width="2.200" fill="none"/><path d="M1264.4 631.5L1297.4 641.4" stroke="#3c4248" stroke-width="2.200" fill="none"/><path d="M1266.8 642.0L1292.8 649.8" stroke="#3c4248" stroke-width="2.200" fill="none"/><path d="M1269.2 652.5L1288.2 658.2" stroke="#3c4248" stroke-width="2.200" fill="none"/><path d="M1271.6 663.0L1283.6 666.6" stroke="#3c4248" stroke-width="2.200" fill="none"/><path d="M1102 523L1234 549.500Q1241 551 1242.500 558L1268.500 680.500L1136 642Q1132 640.500 1130.500 636L1096.500 531Q1094.500 522 1102 523Z" fill="#696f78" stroke="#1c2125" stroke-width="3.400" stroke-linejoin="round"/><path d="M1101 527L1234 553.500" stroke="#b9bdc2" stroke-width="2.600" fill="none" stroke-linecap="round"/><path d="M1235 555L1262 674" stroke="#1c2125" stroke-width="2.400" fill="none"/><path d="M1134 641L1268 681L1268.500 687L1139 648.500Z" fill="#7d838b" stroke="#1c2125" stroke-width="2.400" stroke-linejoin="round"/><ellipse cx="1180" cy="598" rx="11.500" ry="13" fill="#d3d4d7" stroke="#1c2125" stroke-width="3" transform="rotate(-20 1180 598)"/><path d="M1400.0 458.0C1402.9 452.0 1409.0 452.7 1414.0 448.0C1419.0 443.3 1426.2 436.7 1430.0 430.0C1433.8 423.3 1434.1 410.7 1437.0 408.0C1439.9 405.3 1442.5 411.0 1447.5 414.0C1452.5 417.0 1460.8 422.0 1467.0 426.0C1473.2 430.0 1480.3 432.8 1485.0 438.0C1489.7 443.2 1491.5 448.7 1495.0 457.0C1498.5 465.3 1502.8 476.3 1506.0 488.0C1509.2 499.7 1512.2 514.3 1514.0 527.0C1515.8 539.7 1517.3 553.3 1517.0 564.0C1516.7 574.7 1515.9 583.1 1512.0 591.0C1508.1 598.9 1501.1 605.3 1493.6 611.5C1486.1 617.7 1477.1 622.9 1466.8 628.0C1456.5 633.1 1442.8 639.1 1431.8 642.4C1420.8 645.7 1412.2 646.2 1400.9 647.6C1389.6 649.0 1370.5 654.3 1364.0 651.0C1357.5 647.7 1361.7 635.5 1362.0 628.0C1362.3 620.5 1361.0 612.0 1366.0 606.0C1371.0 600.0 1383.3 597.0 1392.0 592.0C1400.7 587.0 1411.7 581.0 1418.0 576.0C1424.3 571.0 1429.0 566.7 1430.0 562.0C1431.0 557.3 1428.3 555.7 1424.0 548.0C1419.7 540.3 1408.5 526.7 1404.0 516.0C1399.5 505.3 1397.5 493.7 1396.8 484.0C1396.1 474.3 1397.1 464.0 1400.0 458.0Z" fill="#fff" stroke="#1c2125" stroke-width="5" stroke-linejoin="round" stroke-linecap="round" /><path d="M1484.0 440.0C1486.0 439.3 1490.5 450.0 1494.0 458.0C1497.5 466.0 1501.8 476.5 1505.0 488.0C1508.2 499.5 1511.2 514.3 1513.0 527.0C1514.8 539.7 1516.3 553.5 1516.0 564.0C1515.7 574.5 1514.8 582.3 1511.0 590.0C1507.2 597.7 1500.5 603.8 1493.0 610.0C1485.5 616.2 1476.3 621.8 1466.0 627.0C1455.7 632.2 1442.0 637.8 1431.0 641.0C1420.0 644.2 1405.5 646.8 1400.0 646.0C1394.5 645.2 1391.3 639.3 1398.0 636.0C1404.7 632.7 1427.7 630.7 1440.0 626.0C1452.3 621.3 1463.0 615.0 1472.0 608.0C1481.0 601.0 1489.0 592.0 1494.0 584.0C1499.0 576.0 1501.0 569.5 1502.0 560.0C1503.0 550.5 1501.7 538.7 1500.0 527.0C1498.3 515.3 1495.0 500.8 1492.0 490.0C1489.0 479.2 1483.3 470.3 1482.0 462.0C1480.7 453.7 1482.0 440.7 1484.0 440.0Z" fill="#d2d3d6"/><path d="M1400.0 474.0C1401.0 474.5 1402.0 491.7 1404.0 500.0C1406.0 508.3 1408.3 516.3 1412.0 524.0C1415.7 531.7 1425.3 543.3 1426.0 546.0C1426.7 548.7 1419.7 544.3 1416.0 540.0C1412.3 535.7 1407.0 527.2 1404.0 520.0C1401.0 512.8 1398.7 504.7 1398.0 497.0C1397.3 489.3 1399.0 473.5 1400.0 474.0Z" fill="#d2d3d6"/><path d="M1400.0 458.0C1402.9 452.0 1409.0 452.7 1414.0 448.0C1419.0 443.3 1426.2 436.7 1430.0 430.0C1433.8 423.3 1434.1 410.7 1437.0 408.0C1439.9 405.3 1442.5 411.0 1447.5 414.0C1452.5 417.0 1460.8 422.0 1467.0 426.0C1473.2 430.0 1480.3 432.8 1485.0 438.0C1489.7 443.2 1491.5 448.7 1495.0 457.0C1498.5 465.3 1502.8 476.3 1506.0 488.0C1509.2 499.7 1512.2 514.3 1514.0 527.0C1515.8 539.7 1517.3 553.3 1517.0 564.0C1516.7 574.7 1515.9 583.1 1512.0 591.0C1508.1 598.9 1501.1 605.3 1493.6 611.5C1486.1 617.7 1477.1 622.9 1466.8 628.0C1456.5 633.1 1442.8 639.1 1431.8 642.4C1420.8 645.7 1412.2 646.2 1400.9 647.6C1389.6 649.0 1370.5 654.3 1364.0 651.0C1357.5 647.7 1361.7 635.5 1362.0 628.0C1362.3 620.5 1361.0 612.0 1366.0 606.0C1371.0 600.0 1383.3 597.0 1392.0 592.0C1400.7 587.0 1411.7 581.0 1418.0 576.0C1424.3 571.0 1429.0 566.7 1430.0 562.0C1431.0 557.3 1428.3 555.7 1424.0 548.0C1419.7 540.3 1408.5 526.7 1404.0 516.0C1399.5 505.3 1397.5 493.7 1396.8 484.0C1396.1 474.3 1397.1 464.0 1400.0 458.0Z" fill="none" stroke="#1c2125" stroke-width="5" stroke-linejoin="round" stroke-linecap="round" /><path d="M1450 478.500L1487 465.500Q1492 464 1493.500 469L1501.500 498Q1503 503 1498 504L1460 510Q1455 511 1453.500 506L1445.500 485Q1444 480.500 1450 478.500Z" fill="#fff" stroke="#1c2125" stroke-width="3.600" stroke-linejoin="round"/><path d="M1448.0 492.0C1452.0 490.8 1463.5 486.5 1472.0 485.0C1480.5 483.5 1494.2 483.2 1498.7 482.8" fill="none" stroke="#1c2125" stroke-width="3.4" stroke-linecap="round" stroke-linejoin="round" /><path d="M1460.6 432.4C1457.8 433.3 1449.2 435.6 1444.0 438.0C1438.8 440.4 1434.0 442.8 1429.7 446.8C1425.4 450.8 1420.8 456.2 1418.0 462.0C1415.2 467.8 1414.0 475.8 1413.2 481.8C1412.5 487.8 1412.8 492.9 1413.5 498.0C1414.2 503.1 1415.7 506.9 1417.4 512.7C1419.2 518.5 1421.6 526.5 1424.0 533.0C1426.4 539.5 1430.5 548.7 1431.8 551.8" fill="none" stroke="#1c2125" stroke-width="4.2" stroke-linecap="round" stroke-linejoin="round" /><path d="M1433.8 551.8C1436.9 549.0 1445.2 539.1 1452.4 535.3C1459.6 531.5 1468.8 529.0 1477.0 529.0C1485.2 529.0 1495.6 532.9 1501.8 535.3C1508.0 537.7 1512.0 542.2 1514.0 543.6" fill="none" stroke="#1c2125" stroke-width="4.2" stroke-linecap="round" stroke-linejoin="round" /><path d="M1433.8 556.0C1438.6 555.6 1453.8 552.9 1462.7 553.9C1471.6 554.9 1480.5 558.2 1487.4 562.0C1494.3 565.8 1500.1 572.7 1503.9 576.5C1507.7 580.3 1509.0 583.3 1510.0 584.7" fill="none" stroke="#1c2125" stroke-width="4.2" stroke-linecap="round" stroke-linejoin="round" /><path d="M1438.0 553.9C1442.0 552.4 1454.2 546.7 1462.0 545.0C1469.8 543.3 1481.2 543.8 1485.0 543.6" fill="none" stroke="#1c2125" stroke-width="3" stroke-linecap="round" stroke-linejoin="round" /><path d="M1435.9 562.0C1439.1 562.7 1448.8 563.6 1455.0 566.0C1461.2 568.4 1467.6 571.0 1473.0 576.5C1478.4 582.0 1485.4 592.1 1487.4 599.0C1489.5 605.9 1485.7 614.6 1485.3 617.7" fill="none" stroke="#1c2125" stroke-width="4.2" stroke-linecap="round" stroke-linejoin="round" /><path d="M1407.0 584.7C1410.8 587.5 1424.5 595.0 1429.7 601.2C1434.9 607.4 1437.3 614.6 1438.0 621.8C1438.7 629.0 1434.5 640.6 1433.8 644.4" fill="none" stroke="#1c2125" stroke-width="4.2" stroke-linecap="round" stroke-linejoin="round" /><path d="M1390.0 594.0C1391.3 597.0 1396.8 605.3 1398.0 612.0C1399.2 618.7 1397.8 628.2 1397.0 634.0C1396.2 639.8 1393.7 644.8 1393.0 647.0" fill="none" stroke="#1c2125" stroke-width="3.8" stroke-linecap="round" stroke-linejoin="round" /><path d="M1379.0 600.0C1380.2 603.0 1385.0 612.0 1386.0 618.0C1387.0 624.0 1385.8 630.8 1385.0 636.0C1384.2 641.2 1381.7 646.8 1381.0 649.0" fill="none" stroke="#1c2125" stroke-width="3.8" stroke-linecap="round" stroke-linejoin="round" /><path d="M1369.0 605.0C1370.0 607.8 1374.2 616.5 1375.0 622.0C1375.8 627.5 1374.8 633.3 1374.0 638.0C1373.2 642.7 1370.7 648.0 1370.0 650.0" fill="none" stroke="#1c2125" stroke-width="3.8" stroke-linecap="round" stroke-linejoin="round" /><path d="M1366.0 606.0C1361.8 601.7 1352.7 602.3 1345.0 602.0C1337.3 601.7 1327.2 602.5 1320.0 604.0C1312.8 605.5 1307.0 608.2 1302.0 611.0C1297.0 613.8 1293.2 617.5 1290.0 621.0C1286.8 624.5 1283.3 628.8 1283.0 632.0C1282.7 635.2 1285.8 638.5 1288.0 640.0C1290.2 641.5 1294.0 639.7 1296.0 641.0C1298.0 642.3 1297.7 646.5 1300.0 648.0C1302.3 649.5 1307.0 648.8 1310.0 650.0C1313.0 651.2 1314.3 654.5 1318.0 655.0C1321.7 655.5 1326.7 654.2 1332.0 653.0C1337.3 651.8 1344.7 648.5 1350.0 648.0C1355.3 647.5 1360.7 653.3 1364.0 650.0C1367.3 646.7 1369.7 635.3 1370.0 628.0C1370.3 620.7 1370.2 610.3 1366.0 606.0Z" fill="#fff" stroke="#1c2125" stroke-width="5" stroke-linejoin="round" stroke-linecap="round" /><path d="M1300.0 646.0C1298.7 646.7 1308.3 648.7 1312.0 650.0C1315.7 651.3 1317.7 653.7 1322.0 654.0C1326.3 654.3 1331.7 653.0 1338.0 652.0C1344.3 651.0 1356.0 650.0 1360.0 648.0C1364.0 646.0 1365.3 640.7 1362.0 640.0C1358.7 639.3 1347.0 643.0 1340.0 644.0C1333.0 645.0 1326.7 645.7 1320.0 646.0C1313.3 646.3 1301.3 645.3 1300.0 646.0Z" fill="#d2d3d6"/><path d="M1366.0 606.0C1361.8 601.7 1352.7 602.3 1345.0 602.0C1337.3 601.7 1327.2 602.5 1320.0 604.0C1312.8 605.5 1307.0 608.2 1302.0 611.0C1297.0 613.8 1293.2 617.5 1290.0 621.0C1286.8 624.5 1283.3 628.8 1283.0 632.0C1282.7 635.2 1285.8 638.5 1288.0 640.0C1290.2 641.5 1294.0 639.7 1296.0 641.0C1298.0 642.3 1297.7 646.5 1300.0 648.0C1302.3 649.5 1307.0 648.8 1310.0 650.0C1313.0 651.2 1314.3 654.5 1318.0 655.0C1321.7 655.5 1326.7 654.2 1332.0 653.0C1337.3 651.8 1344.7 648.5 1350.0 648.0C1355.3 647.5 1360.7 653.3 1364.0 650.0C1367.3 646.7 1369.7 635.3 1370.0 628.0C1370.3 620.7 1370.2 610.3 1366.0 606.0Z" fill="none" stroke="#1c2125" stroke-width="5" stroke-linejoin="round" stroke-linecap="round" /><path d="M1292.0 638.0C1293.3 636.0 1296.3 629.3 1300.0 626.0C1303.7 622.7 1309.7 619.7 1314.0 618.0C1318.3 616.3 1324.0 616.3 1326.0 616.0" fill="none" stroke="#1c2125" stroke-width="3.4" stroke-linecap="round" stroke-linejoin="round" /><path d="M1300.0 646.0C1301.3 644.0 1304.3 637.3 1308.0 634.0C1311.7 630.7 1317.3 627.8 1322.0 626.0C1326.7 624.2 1333.7 623.5 1336.0 623.0" fill="none" stroke="#1c2125" stroke-width="3.4" stroke-linecap="round" stroke-linejoin="round" /><path d="M1312.0 651.0C1313.3 649.3 1316.7 643.8 1320.0 641.0C1323.3 638.2 1328.0 635.5 1332.0 634.0C1336.0 632.5 1342.0 632.3 1344.0 632.0" fill="none" stroke="#1c2125" stroke-width="3.4" stroke-linecap="round" stroke-linejoin="round" /></g></svg>
<span class="t" style="left:291.50px;top:421px;font-size:108px;line-height:130px;color:#fff;letter-spacing:4.214px;">Oops!</span>
<span class="t" style="left:292.50px;top:579px;font-size:33.5px;line-height:40px;color:#fff;letter-spacing:0.651px;">You Seem To Be Lost!</span>
<span class="t" style="left:292.50px;top:650px;font-size:21.5px;line-height:26px;color:#fff;letter-spacing:0.853px;-webkit-text-stroke:0.35px #fff;">The page you are looking for does not exist.</span>
<div class="abs" style="left:292.500px;top:705px;width:243px;height:74.500px;border:2.200px solid #fff;border-radius:38px"></div>
<span class="t" style="left:336.70px;top:729px;font-size:21px;line-height:25px;color:#fff;letter-spacing:-0.523px;-webkit-text-stroke:0.4px #fff;">BACK TO HOME</span>
<div class="badge" style="left:2106.5px;top:312.5px">1</div><div class="badge" style="left:2106.5px;top:512.2px">2</div><div class="badge" style="left:2113.5px;top:619.0px">3</div><div class="badge" style="left:2111.1px;top:717.5px">4</div><div class="badge" style="left:2107.5px;top:995.0px">5</div>
</body></html>
